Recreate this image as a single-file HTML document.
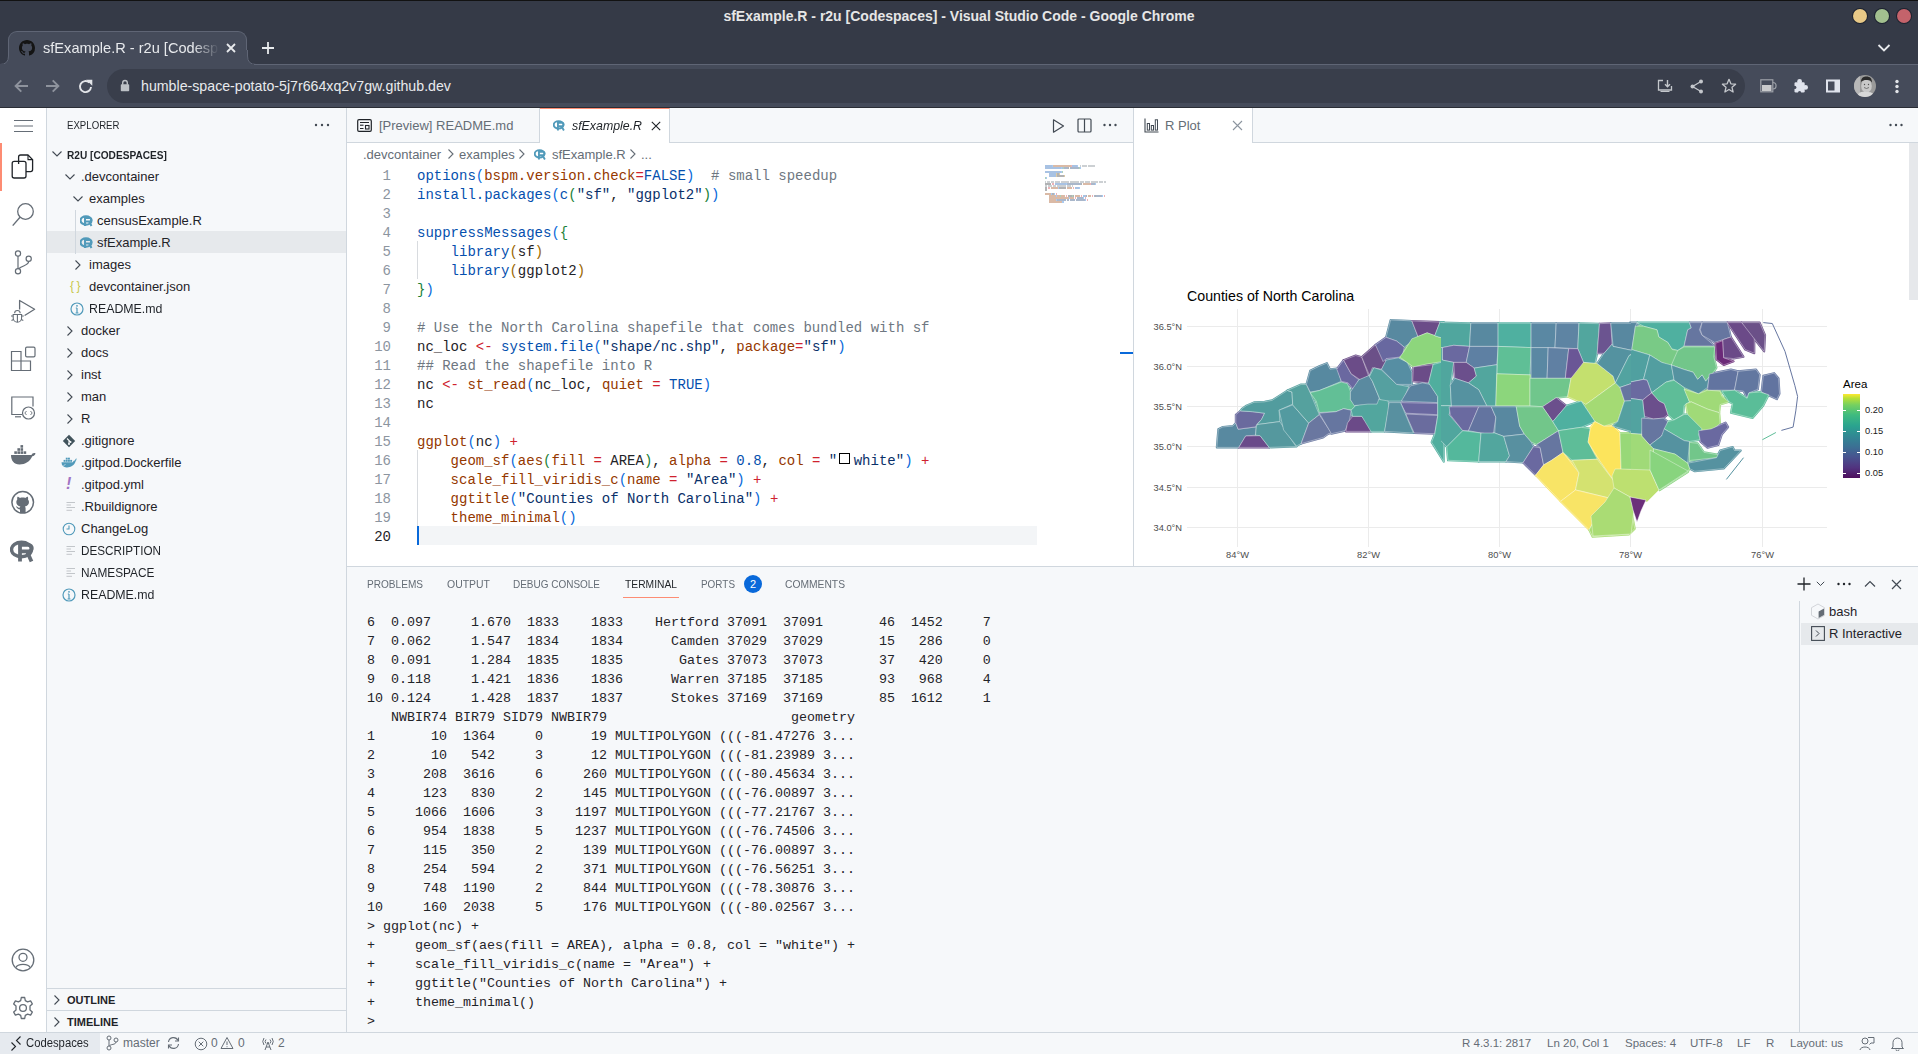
<!DOCTYPE html>
<html><head><meta charset="utf-8">
<style>
*{box-sizing:border-box;margin:0;padding:0}
html,body{width:1918px;height:1054px;overflow:hidden;background:#fff;font-family:"Liberation Sans",sans-serif}
.a{position:absolute}
.mono{font-family:"Liberation Mono",monospace}
/* chrome */
#chrome{left:0;top:0;width:1918px;height:108px;background:#353a47}
#topline{left:0;top:0;width:1918px;height:1px;background:#121212}
#wtitle{left:0;top:7px;width:1918px;text-align:center;color:#e6e6e6;font-weight:bold;font-size:14px;line-height:18px}
.tl{top:9px;width:14px;height:14px;border-radius:50%;box-shadow:0 0 0 1px #1d2330}
#tab{left:8px;top:31px;width:239px;height:34px;background:#454b5a;border-radius:9px 9px 0 0;border:1px solid #5f6575;border-bottom:none}
#toolbar{left:0;top:64px;width:1918px;height:43px;background:#454b5a}
#tbline{left:0;top:107px;width:1918px;height:1px;background:#2a2d35}
#omni{left:107px;top:69px;width:1638px;height:34px;border-radius:17px;background:#393e4b}
#url{left:141px;top:77px;color:#e8eaed;font-size:14.2px;line-height:18px}
/* vscode */
#act{left:0;top:108px;width:47px;height:924px;background:#fff;border-right:1px solid #d0d7de}
#side{left:47px;top:108px;width:300px;height:924px;background:#f6f8fa;border-right:1px solid #d0d7de}
#ed1{left:347px;top:108px;width:787px;height:458px;background:#fff}
#ed2{left:1133px;top:108px;width:785px;height:458px;background:#fff;border-left:1px solid #d0d7de}
#tabs1{left:347px;top:108px;width:786px;height:35px;background:#f6f8fa;border-bottom:1px solid #d0d7de}
#tabs2{left:1134px;top:108px;width:784px;height:35px;background:#f6f8fa;border-bottom:1px solid #d0d7de}
#panel{left:347px;top:566px;width:1571px;height:466px;background:#f6f8fa;border-top:1px solid #d0d7de}
#status{left:0;top:1032px;width:1918px;height:22px;background:#f6f8fa;border-top:1px solid #d0d7de}
.code{font-family:"Liberation Mono",monospace;font-size:14px;line-height:19px;white-space:pre}
.term{font-family:"Liberation Mono",monospace;font-size:13.33px;line-height:19px;white-space:pre;color:#1f2328}
.ui{font-size:13px;color:#1f2328;white-space:nowrap}
</style></head><body>
<div id="chrome" class="a"></div>
<div id="topline" class="a"></div>
<div id="wtitle" class="a">sfExample.R - r2u [Codespaces] - Visual Studio Code - Google Chrome</div>
<div class="a tl" style="left:1853px;background:#e8c987"></div>
<div class="a tl" style="left:1875px;background:#a3c08f"></div>
<div class="a tl" style="left:1897px;background:#c4636b"></div>
<div id="tab" class="a"></div>
<svg class="a" style="left:0;top:50px" width="10" height="15"><path d="M0 14.5 Q8.5 14.5 8.5 6 V0 H10 V15 H0Z" fill="#454b5a"/><path d="M0 14.5 Q8.5 14.5 8.5 6 V0" fill="none" stroke="#5f6575" stroke-width="1"/></svg>
<svg class="a" style="left:246px;top:50px" width="10" height="15"><path d="M10 14.5 Q1.5 14.5 1.5 6 V0 H0 V15 H10Z" fill="#454b5a"/><path d="M10 14.5 Q1.5 14.5 1.5 6 V0" fill="none" stroke="#5f6575" stroke-width="1"/></svg>
<div id="toolbar" class="a"></div>
<div class="a" style="left:254px;top:64px;width:1664px;height:1px;background:#5f6575"></div>
<svg class="a" style="left:19px;top:40px" width="16" height="16" viewBox="0 0 16 16"><path fill="#141414" d="M8 0C3.58 0 0 3.58 0 8c0 3.54 2.29 6.53 5.47 7.59.4.07.55-.17.55-.38 0-.19-.01-.82-.01-1.49-2.01.37-2.53-.49-2.69-.94-.09-.23-.48-.94-.82-1.13-.28-.15-.68-.52-.01-.53.63-.01 1.08.58 1.23.82.72 1.21 1.87.87 2.33.66.07-.52.28-.87.51-1.07-1.78-.2-3.640-.89-3.64-3.950 0-.87.31-1.59.82-2.15-.08-.2-.36-1.02.08-2.12 0 0 .67-.21 2.2.82.64-.18 1.32-.27 2-.27.68 0 1.36.09 2 .27 1.53-1.04 2.2-.82 2.2-.82.44 1.1.16 1.92.08 2.12.51.56.82 1.27.82 2.15 0 3.07-1.87 3.75-3.650 3.95.29.25.54.73.54 1.48 0 1.07-.01 1.93-.01 2.2 0 .21.15.46.55.38A8.013 8.013 0 0016 8c0-4.42-3.58-8-8-8z"/></svg>
<div class="a" style="left:43px;top:39px;width:176px;height:20px;overflow:hidden;color:#e8eaed;font-size:14.6px;line-height:18px;white-space:nowrap;-webkit-mask-image:linear-gradient(90deg,#000 150px,transparent 176px)">sfExample.R - r2u [Codespaces] - Visual Studio Code</div>
<svg class="a" style="left:225px;top:42px" width="12" height="12"><path d="M2 2L10 10M10 2L2 10" stroke="#e8eaed" stroke-width="1.8"/></svg>
<svg class="a" style="left:261px;top:41px" width="14" height="14"><path d="M7 1V13M1 7H13" stroke="#e8eaed" stroke-width="1.8"/></svg>
<svg class="a" style="left:1877px;top:43px" width="14" height="10"><path d="M1.5 2L7 7.5L12.5 2" fill="none" stroke="#e8eaed" stroke-width="1.8"/></svg>
<div id="tbline" class="a"></div>
<div id="omni" class="a"></div>
<svg class="a" style="left:13px;top:78px" width="16" height="16" viewBox="0 0 16 16"><path d="M15 8H2.8M8.3 2.3L2.6 8L8.3 13.7" fill="none" stroke="#8e939d" stroke-width="1.9"/></svg>
<svg class="a" style="left:45px;top:78px" width="16" height="16" viewBox="0 0 16 16"><path d="M1 8H13.2M7.7 2.3L13.4 8L7.7 13.7" fill="none" stroke="#8e939d" stroke-width="1.9"/></svg>
<svg class="a" style="left:77px;top:78px" width="17" height="17" viewBox="0 0 16 16"><path d="M13.2 8.5A5.2 5.2 0 1 1 11.6 4.3" fill="none" stroke="#e3e5e9" stroke-width="1.8"/><path d="M8.6 1.6H14.4V7.4Z" fill="#e3e5e9"/></svg>
<svg class="a" style="left:120px;top:79px" width="10" height="13" viewBox="0 0 10 13"><rect x="0.8" y="5.3" width="8.4" height="7" rx="0.8" fill="#bdc1c6"/><path d="M2.7 5.8V3.8A2.3 2.3 0 0 1 7.3 3.8V5.8" fill="none" stroke="#bdc1c6" stroke-width="1.4"/></svg>
<div id="url" class="a">humble-space-potato-5j7r664xq2v7gw.github.dev</div>
<svg class="a" style="left:1657px;top:79px" width="16" height="15" viewBox="0 0 16 15"><path d="M6 1.5H1.5V11H14.5V7" fill="none" stroke="#c4c7cc" stroke-width="1.3"/><path d="M10.5 1V7.5M8 5.3L10.5 7.8L13 5.3" fill="none" stroke="#c4c7cc" stroke-width="1.4"/><rect x="3.5" y="12" width="9" height="1" fill="#c4c7cc"/></svg>
<svg class="a" style="left:1690px;top:79px" width="14" height="15" viewBox="0 0 14 15"><circle cx="11" cy="2.5" r="2" fill="#c4c7cc"/><circle cx="2.5" cy="7.5" r="2" fill="#c4c7cc"/><circle cx="11" cy="12.5" r="2" fill="#c4c7cc"/><path d="M11 2.5L2.5 7.5L11 12.5" fill="none" stroke="#c4c7cc" stroke-width="1.3"/></svg>
<svg class="a" style="left:1721px;top:78px" width="16" height="16" viewBox="0 0 16 16"><path d="M8 1.3L9.9 5.8L14.6 6.2L11 9.3L12.1 14L8 11.5L3.9 14L5 9.3L1.4 6.2L6.1 5.8Z" fill="none" stroke="#c4c7cc" stroke-width="1.3" stroke-linejoin="round"/></svg>
<svg class="a" style="left:1760px;top:79px" width="18" height="14" viewBox="0 0 18 14"><rect x="0.8" y="0.8" width="12" height="12" fill="none" stroke="#9da1a8" stroke-width="1.2"/><rect x="2" y="6" width="9.5" height="6" fill="#c9cacc"/><path d="M12.8 3.5A3 3 0 0 1 12.8 10" fill="none" stroke="#9da1a8" stroke-width="1.2"/></svg>
<svg class="a" style="left:1793px;top:78px" width="16" height="16" viewBox="0 0 16 16"><g fill="#dfe3ec"><rect x="1.5" y="4.3" width="10.2" height="10.2" rx="1.3"/><circle cx="6.6" cy="3.4" r="2.4"/><circle cx="12.6" cy="9.4" r="2.4"/><circle cx="1.8" cy="9.4" r="1.6" fill="#454b5a"/><circle cx="6.6" cy="14.6" r="1.6" fill="#454b5a"/></g></svg>
<svg class="a" style="left:1825px;top:78px" width="16" height="16" viewBox="0 0 16 16"><rect x="1" y="1.5" width="14" height="13" fill="#dfe3ec"/><rect x="3" y="3.5" width="6.5" height="9" fill="#454b5a"/></svg>
<svg class="a" style="left:1854px;top:75px" width="22" height="22" viewBox="0 0 22 22"><defs><clipPath id="av"><circle cx="11" cy="11" r="11"/></clipPath></defs><g clip-path="url(#av)"><rect width="22" height="22" fill="#9a9a9a"/><rect x="0" y="0" width="6" height="22" fill="#b8b8b8"/><ellipse cx="12.5" cy="11" rx="5.3" ry="6.8" fill="#c9c9c9"/><path d="M7 7C7 2.5 10 1.5 12.5 1.5C16 1.5 18 3.5 18 7.5C17 5.5 15 4.8 12.5 5C10 5 8.5 5.5 7 7Z" fill="#2a2a2a"/><path d="M10 12.5Q12.5 14.5 15 12.5" stroke="#6a6a6a" stroke-width="0.9" fill="none"/><circle cx="10.5" cy="9.5" r="0.7" fill="#555"/><circle cx="14.5" cy="9.5" r="0.7" fill="#555"/><path d="M3 22C4 17 8 16.5 12.5 17C17 16.5 20 18 21 22Z" fill="#d8d8d8"/></g></svg>

<svg class="a" style="left:1893px;top:79px" width="8" height="16" viewBox="0 0 8 16"><circle cx="4" cy="2.5" r="1.7" fill="#e3e5e9"/><circle cx="4" cy="7.5" r="1.7" fill="#e3e5e9"/><circle cx="4" cy="12.5" r="1.7" fill="#e3e5e9"/></svg>

<div id="act" class="a"></div>
<div id="side" class="a"></div>
<svg class="a" style="left:0;top:0" width="47" height="1054" fill="none" stroke="#656d76" stroke-width="1.2">
<path d="M14 120.5H33M14 126H33M14 131.5H33" stroke-width="1.1"/>
<path d="M18.6 164V157A2 2 0 0 1 20.6 155H28L32.6 159.6V169.6A2 2 0 0 1 30.6 171.6H26" stroke="#1f2328" stroke-width="1.3" stroke-linejoin="round"/>
<path d="M28 155V159.6H32.6" stroke="#1f2328" stroke-width="1.1"/>
<rect x="12.2" y="161.4" width="13.8" height="16.6" rx="2" stroke="#1f2328" stroke-width="1.3"/>
<circle cx="25.5" cy="211.5" r="7.8" stroke-width="1.3"/>
<path d="M20 217.3L12.7 225.6" stroke-width="1.4"/>
<circle cx="18" cy="253.5" r="2.6"/><circle cx="18" cy="271.3" r="2.6"/><circle cx="28.7" cy="258.7" r="2.6"/>
<path d="M18 256.1V268.7M28.7 261.3C28.7 265.5 23 265 18.6 268.8"/>
<path d="M19.6 309.5V300.5L34.6 309.3L24.6 315.5" stroke-linejoin="round" stroke-width="1.3"/>
<path d="M14.6 313.3A2.8 2.8 0 0 1 20.2 313.3M13.2 314.5H21.6V318A4.2 4.2 0 0 1 13.2 318ZM11 316H13.2M21.6 316H23.8M11.5 320.5L13.5 319.5M23.3 320.5L21.3 319.5M17.4 314.5V322" stroke-width="1.1"/>
<path d="M11.5 351.5H21V361H11.5ZM11.5 361H21V370.5H11.5ZM21 361H30.5V370.5H21Z" stroke-width="1.2"/>
<rect x="25.6" y="347.2" width="9.4" height="9.6" rx="1.3" stroke-width="1.2"/>
<path d="M22 414.5H11.8V397H33V406.5" stroke-width="1.2"/><path d="M15 416.8H21" stroke-width="1.2"/>
<circle cx="28.5" cy="413" r="6" stroke-width="1.2"/><path d="M26.5 411L24.8 413L26.5 415M30.5 411L32.2 413L30.5 415" stroke-width="0.9"/>
<path fill="#656d76" stroke="none" d="M11 455H31.5C32 453.2 33.7 452.5 35.5 453.2C35.2 455 34 456 32.3 456.3C30 461.5 25.3 464.5 19.5 464.5C14 464.5 11 460.5 11 455Z"/>
<g fill="#656d76" stroke="none"><rect x="14.3" y="451.3" width="2.6" height="2.6"/><rect x="17.4" y="451.3" width="2.6" height="2.6"/><rect x="20.5" y="451.3" width="2.6" height="2.6"/><rect x="23.6" y="451.3" width="2.6" height="2.6"/><rect x="20.5" y="448.2" width="2.6" height="2.6"/><rect x="17.4" y="448.2" width="2.6" height="2.6"/><rect x="20.5" y="445.1" width="2.6" height="2.6"/></g>
<circle cx="22.7" cy="502.3" r="10.8" stroke-width="1.5"/>
<path fill="#656d76" stroke="none" d="M20 513V509.5C18 509.2 16.8 508.2 16.3 507C16 506 16.8 506.3 17.5 507C18.3 508 19.3 507.8 19.8 507.5C19.9 507 20.1 506.6 20.4 506.4C18 506 16.3 504.8 16.3 502C16.3 501 16.6 500.2 17.3 499.4C17.2 499 17 498 17.5 496.8C18.4 496.8 19.4 497.5 19.9 497.9C21.4 497.5 23.9 497.5 25.4 497.9C25.9 497.5 26.9 496.8 27.8 496.8C28.3 498 28.1 499 28 499.4C28.7 500.2 29 501 29 502C29 504.8 27.3 506 24.9 506.4C25.3 506.8 25.6 507.4 25.6 508.3V513Z"/>
</svg>
<svg class="a" style="left:10px;top:540px" width="27" height="23" viewBox="0 0 27 23"><ellipse cx="11.5" cy="9.5" rx="10" ry="7.3" fill="none" stroke="#656d76" stroke-width="3.4"/><path d="M10 4.8H18.5A3.3 3.3 0 0 1 18.5 11.4H10ZM10 4.8V21.5M17 11.4L21.5 21.5" fill="none" stroke="#656d76" stroke-width="3.8"/></svg>
<div class="a" style="left:0;top:143px;width:2px;height:48px;background:#fd8c73"></div>
<svg class="a" style="left:11px;top:948px" width="24" height="24" viewBox="0 0 24 24" fill="none" stroke="#656d76" stroke-width="1.3"><circle cx="12" cy="12" r="10.8"/><circle cx="12" cy="9.3" r="4"/><path d="M5 19.5C6.5 15.3 17.5 15.3 19 19.5"/></svg>
<svg class="a" style="left:11px;top:996px" width="24" height="24" viewBox="0 0 24 24" fill="none" stroke="#656d76" stroke-width="1.3"><path d="M10.3 1.5H13.7L14.3 4.6L16.6 5.9L19.6 4.9L21.3 7.9L19 10V14L21.3 16.1L19.6 19.1L16.6 18.1L14.3 19.4L13.7 22.5H10.3L9.7 19.4L7.4 18.1L4.4 19.1L2.7 16.1L5 14V10L2.7 7.9L4.4 4.9L7.4 5.9L9.7 4.6Z" stroke-linejoin="round"/><circle cx="12" cy="12" r="3.4"/></svg>
<div class="a ui" style="left:67px;top:117px;font-size:11px;line-height:16px;color:#1f2328;transform-origin:0 0;transform:scaleX(0.876)">EXPLORER</div><svg class="a" style="left:314px;top:122px" width="16" height="6"><circle cx="2" cy="3" r="1.2" fill="#424a53"/><circle cx="8" cy="3" r="1.2" fill="#424a53"/><circle cx="14" cy="3" r="1.2" fill="#424a53"/></svg><div class="a" style="left:47px;top:231px;width:299px;height:22px;background:#e6e9ec"></div><div class="a" style="left:75px;top:210px;width:1px;height:44px;background:#d0d7de"></div><svg class="a" style="left:51px;top:148px" width="12" height="12"><path d="M1.5 3.5L6 8L10.5 3.5" fill="none" stroke="#424a53" stroke-width="1.1"/></svg><div class="a ui" style="left:67px;top:147px;line-height:16px;font-size:11px;font-weight:bold;transform-origin:0 0;transform:scaleX(0.92)">R2U [CODESPACES]</div><svg class="a" style="left:64px;top:171px" width="12" height="12"><path d="M1.5 3.5L6 8L10.5 3.5" fill="none" stroke="#424a53" stroke-width="1.1"/></svg><div class="a ui" style="left:81px;top:168px;line-height:18px">.devcontainer</div><svg class="a" style="left:72px;top:193px" width="12" height="12"><path d="M1.5 3.5L6 8L10.5 3.5" fill="none" stroke="#424a53" stroke-width="1.1"/></svg><div class="a ui" style="left:89px;top:190px;line-height:18px">examples</div><svg class="a" style="left:80px;top:215px" width="14" height="12" viewBox="0 0 14 12"><ellipse cx="6" cy="5.5" rx="5.5" ry="4.2" fill="none" stroke="#519aba" stroke-width="2.2"/><path d="M5 3H9.5A1.7 1.7 0 0 1 9.5 6.6H5ZM5 3V11M9 6.5L11.5 11" fill="none" stroke="#519aba" stroke-width="2"/></svg><div class="a ui" style="left:97px;top:212px;line-height:18px">censusExample.R</div><svg class="a" style="left:80px;top:237px" width="14" height="12" viewBox="0 0 14 12"><ellipse cx="6" cy="5.5" rx="5.5" ry="4.2" fill="none" stroke="#519aba" stroke-width="2.2"/><path d="M5 3H9.5A1.7 1.7 0 0 1 9.5 6.6H5ZM5 3V11M9 6.5L11.5 11" fill="none" stroke="#519aba" stroke-width="2"/></svg><div class="a ui" style="left:97px;top:234px;line-height:18px">sfExample.R</div><svg class="a" style="left:72px;top:259px" width="12" height="12"><path d="M3.5 1.5L8 6L3.5 10.5" fill="none" stroke="#424a53" stroke-width="1.1"/></svg><div class="a ui" style="left:89px;top:256px;line-height:18px">images</div><div class="a" style="left:70px;top:277px;font-size:12px;line-height:18px;color:#c8c84a;font-family:'Liberation Sans';letter-spacing:2.5px">{}</div><div class="a ui" style="left:89px;top:278px;line-height:18px">devcontainer.json</div><svg class="a" style="left:70px;top:302px" width="14" height="14"><circle cx="7" cy="7" r="6" fill="none" stroke="#519aba" stroke-width="1.2"/><path d="M7 6V11M5.5 11H8.5M5.8 6H7" stroke="#519aba" stroke-width="1.2" fill="none"/><circle cx="7" cy="3.8" r="0.9" fill="#519aba"/></svg><div class="a ui" style="left:89px;top:300px;line-height:18px;transform-origin:0 0;transform:scaleX(0.95)">README.md</div><svg class="a" style="left:64px;top:325px" width="12" height="12"><path d="M3.5 1.5L8 6L3.5 10.5" fill="none" stroke="#424a53" stroke-width="1.1"/></svg><div class="a ui" style="left:81px;top:322px;line-height:18px">docker</div><svg class="a" style="left:64px;top:347px" width="12" height="12"><path d="M3.5 1.5L8 6L3.5 10.5" fill="none" stroke="#424a53" stroke-width="1.1"/></svg><div class="a ui" style="left:81px;top:344px;line-height:18px">docs</div><svg class="a" style="left:64px;top:369px" width="12" height="12"><path d="M3.5 1.5L8 6L3.5 10.5" fill="none" stroke="#424a53" stroke-width="1.1"/></svg><div class="a ui" style="left:81px;top:366px;line-height:18px">inst</div><svg class="a" style="left:64px;top:391px" width="12" height="12"><path d="M3.5 1.5L8 6L3.5 10.5" fill="none" stroke="#424a53" stroke-width="1.1"/></svg><div class="a ui" style="left:81px;top:388px;line-height:18px">man</div><svg class="a" style="left:64px;top:413px" width="12" height="12"><path d="M3.5 1.5L8 6L3.5 10.5" fill="none" stroke="#424a53" stroke-width="1.1"/></svg><div class="a ui" style="left:81px;top:410px;line-height:18px">R</div><svg class="a" style="left:62px;top:434px" width="14" height="14"><path d="M7 0.8L13.2 7L7 13.2L0.8 7Z" fill="#41535b"/><path d="M5 4.5L8.5 8M7 6.5V10" stroke="#f6f8fa" stroke-width="1.1"/><circle cx="7" cy="10" r="1" fill="#f6f8fa"/><circle cx="8.5" cy="8" r="1" fill="#f6f8fa"/></svg><div class="a ui" style="left:81px;top:432px;line-height:18px">.gitignore</div><svg class="a" style="left:61px;top:457px" width="16" height="11" viewBox="0 0 16 11"><path d="M0.5 5.2H11.8C12.3 4.2 13.2 3.3 14.3 3.3C14 2.5 14.5 1.6 15.5 1.2C15.6 2.4 15.3 3.6 14.5 4.6C13.5 8.5 9.5 10.6 5.5 10.4C2.5 10.2 0.5 8.5 0.5 5.2Z" fill="#519aba"/><g fill="#519aba"><rect x="2.6" y="2.9" width="1.9" height="1.9"/><rect x="4.8" y="2.9" width="1.9" height="1.9"/><rect x="7" y="2.9" width="1.9" height="1.9"/><rect x="9.2" y="2.9" width="1.9" height="1.9"/><rect x="4.8" y="0.7" width="1.9" height="1.9"/><rect x="7" y="0.7" width="1.9" height="1.9"/></g><path d="M2.5 8.5L4.5 7.5" stroke="#f6f8fa" stroke-width="0.6"/></svg><div class="a ui" style="left:81px;top:454px;line-height:18px">.gitpod.Dockerfile</div><div class="a" style="left:66px;top:474px;font-size:16px;line-height:20px;color:#a074c4;font-weight:bold;font-style:italic">!</div><div class="a ui" style="left:81px;top:476px;line-height:18px">.gitpod.yml</div><svg class="a" style="left:66px;top:501px" width="10" height="12"><path d="M0.5 1.5H9M0.5 4H5M0.5 6.5H9M0.5 9.3H6" stroke="#bcc0c4" stroke-width="0.9"/></svg><div class="a ui" style="left:81px;top:498px;line-height:18px">.Rbuildignore</div><svg class="a" style="left:62px;top:522px" width="14" height="14"><circle cx="7" cy="7" r="5.8" fill="none" stroke="#519aba" stroke-width="1.1"/><path d="M7 3.5V7H4.5" stroke="#519aba" stroke-width="1.1" fill="none"/></svg><div class="a ui" style="left:81px;top:520px;line-height:18px">ChangeLog</div><svg class="a" style="left:66px;top:545px" width="10" height="12"><path d="M0.5 1.5H9M0.5 4H5M0.5 6.5H9M0.5 9.3H6" stroke="#bcc0c4" stroke-width="0.9"/></svg><div class="a ui" style="left:81px;top:542px;line-height:18px;transform-origin:0 0;transform:scaleX(0.9)">DESCRIPTION</div><svg class="a" style="left:66px;top:567px" width="10" height="12"><path d="M0.5 1.5H9M0.5 4H5M0.5 6.5H9M0.5 9.3H6" stroke="#bcc0c4" stroke-width="0.9"/></svg><div class="a ui" style="left:81px;top:564px;line-height:18px;transform-origin:0 0;transform:scaleX(0.91)">NAMESPACE</div><svg class="a" style="left:62px;top:588px" width="14" height="14"><circle cx="7" cy="7" r="6" fill="none" stroke="#519aba" stroke-width="1.2"/><path d="M7 6V11M5.5 11H8.5M5.8 6H7" stroke="#519aba" stroke-width="1.2" fill="none"/><circle cx="7" cy="3.8" r="0.9" fill="#519aba"/></svg><div class="a ui" style="left:81px;top:586px;line-height:18px;transform-origin:0 0;transform:scaleX(0.95)">README.md</div><div class="a" style="left:47px;top:988px;width:299px;height:1px;background:#d0d7de"></div><div class="a" style="left:47px;top:1010px;width:299px;height:1px;background:#d0d7de"></div><svg class="a" style="left:51px;top:994px" width="12" height="12"><path d="M3.5 1.5L8 6L3.5 10.5" fill="none" stroke="#424a53" stroke-width="1.1"/></svg><div class="a ui" style="left:67px;top:992px;line-height:16px;font-size:11px;font-weight:bold">OUTLINE</div><svg class="a" style="left:51px;top:1016px" width="12" height="12"><path d="M3.5 1.5L8 6L3.5 10.5" fill="none" stroke="#424a53" stroke-width="1.1"/></svg><div class="a ui" style="left:67px;top:1014px;line-height:16px;font-size:11px;font-weight:bold">TIMELINE</div>
<div id="ed1" class="a"></div>
<div id="ed2" class="a"></div>
<div id="tabs1" class="a"></div>
<div id="tabs2" class="a"></div>
<div class="a" style="left:347px;top:108px;width:193px;height:35px;border-right:1px solid #d0d7de"></div><svg class="a" style="left:357px;top:119px" width="15" height="13" viewBox="0 0 15 13"><rect x="0.7" y="0.7" width="13.6" height="11.6" rx="1.3" fill="none" stroke="#1f2328" stroke-width="1.2"/><path d="M3 3.5H12M3 9.5H6.5" stroke="#1f2328" stroke-width="1.2"/><rect x="8.5" y="6.5" width="3.5" height="3.5" fill="none" stroke="#1f2328" stroke-width="1.1"/><path d="M3 6.2H6.5" stroke="#1f2328" stroke-width="1.1"/></svg><div class="a ui" style="left:379px;top:117px;line-height:18px;color:#656d76">[Preview] README.md</div><div class="a" style="left:540px;top:108px;width:130px;height:35px;background:#fff;border-right:1px solid #d0d7de;border-top:1px solid #fd8c73"></div><svg class="a" style="left:553px;top:120px" width="13" height="11" viewBox="0 0 14 12"><ellipse cx="6" cy="5.2" rx="5.3" ry="4" fill="none" stroke="#519aba" stroke-width="2.1"/><path d="M5.3 3H9.6A1.8 1.8 0 0 1 9.6 6.6H5.3ZM5.3 3V11.5M9 6.5L11.8 11.5" fill="none" stroke="#519aba" stroke-width="2"/></svg><div class="a ui" style="left:572px;top:117px;line-height:18px;font-style:italic;transform-origin:0 0;transform:scaleX(0.95)">sfExample.R</div><svg class="a" style="left:651px;top:121px" width="10" height="10"><path d="M0.8 0.8L9.2 9.2M9.2 0.8L0.8 9.2" stroke="#1f2328" stroke-width="1.1"/></svg><svg class="a" style="left:1051px;top:118px" width="14" height="16" viewBox="0 0 14 16"><path d="M2.5 1.8L12.5 8L2.5 14.2Z" fill="none" stroke="#424a53" stroke-width="1.2" stroke-linejoin="round"/></svg><svg class="a" style="left:1077px;top:118px" width="15" height="15" viewBox="0 0 15 15"><rect x="1" y="1" width="13" height="13" rx="1" fill="none" stroke="#424a53" stroke-width="1.2"/><path d="M7.5 1V14" stroke="#424a53" stroke-width="1.2"/></svg><svg class="a" style="left:1102px;top:122px" width="16" height="6"><circle cx="2.5" cy="3" r="1.2" fill="#424a53"/><circle cx="8" cy="3" r="1.2" fill="#424a53"/><circle cx="13.5" cy="3" r="1.2" fill="#424a53"/></svg><div class="a ui" style="left:363px;top:146px;line-height:18px;color:#656d76">.devcontainer</div><svg class="a" style="left:447px;top:148px" width="8" height="12"><path d="M1.5 1.5L6 6L1.5 10.5" fill="none" stroke="#656d76" stroke-width="1.1"/></svg><div class="a ui" style="left:459px;top:146px;line-height:18px;color:#656d76">examples</div><svg class="a" style="left:518px;top:148px" width="8" height="12"><path d="M1.5 1.5L6 6L1.5 10.5" fill="none" stroke="#656d76" stroke-width="1.1"/></svg><svg class="a" style="left:534px;top:149px" width="13" height="11" viewBox="0 0 14 12"><ellipse cx="6" cy="5.2" rx="5.3" ry="4" fill="none" stroke="#519aba" stroke-width="2.1"/><path d="M5.3 3H9.6A1.8 1.8 0 0 1 9.6 6.6H5.3ZM5.3 3V11.5M9 6.5L11.8 11.5" fill="none" stroke="#519aba" stroke-width="2"/></svg><div class="a ui" style="left:552px;top:146px;line-height:18px;color:#656d76">sfExample.R</div><svg class="a" style="left:629px;top:148px" width="8" height="12"><path d="M1.5 1.5L6 6L1.5 10.5" fill="none" stroke="#656d76" stroke-width="1.1"/></svg><div class="a ui" style="left:641px;top:146px;line-height:18px;color:#656d76">...</div><div class="a" style="left:417px;top:526px;width:620px;height:19px;background:#f3f5f7"></div><div class="a" style="left:417px;top:526px;width:2px;height:19px;background:#0969da"></div><div class="a" style="left:417px;top:241px;width:1px;height:38px;background:#d8dbdf"></div><div class="a" style="left:417px;top:450px;width:1px;height:76px;background:#d8dbdf"></div><div class="a code" style="left:350px;top:167px;width:41px;text-align:right;color:#8c959f">1</div><div class="a code" style="left:350px;top:186px;width:41px;text-align:right;color:#8c959f">2</div><div class="a code" style="left:350px;top:205px;width:41px;text-align:right;color:#8c959f">3</div><div class="a code" style="left:350px;top:224px;width:41px;text-align:right;color:#8c959f">4</div><div class="a code" style="left:350px;top:243px;width:41px;text-align:right;color:#8c959f">5</div><div class="a code" style="left:350px;top:262px;width:41px;text-align:right;color:#8c959f">6</div><div class="a code" style="left:350px;top:281px;width:41px;text-align:right;color:#8c959f">7</div><div class="a code" style="left:350px;top:300px;width:41px;text-align:right;color:#8c959f">8</div><div class="a code" style="left:350px;top:319px;width:41px;text-align:right;color:#8c959f">9</div><div class="a code" style="left:350px;top:338px;width:41px;text-align:right;color:#8c959f">10</div><div class="a code" style="left:350px;top:357px;width:41px;text-align:right;color:#8c959f">11</div><div class="a code" style="left:350px;top:376px;width:41px;text-align:right;color:#8c959f">12</div><div class="a code" style="left:350px;top:395px;width:41px;text-align:right;color:#8c959f">13</div><div class="a code" style="left:350px;top:414px;width:41px;text-align:right;color:#8c959f">14</div><div class="a code" style="left:350px;top:433px;width:41px;text-align:right;color:#8c959f">15</div><div class="a code" style="left:350px;top:452px;width:41px;text-align:right;color:#8c959f">16</div><div class="a code" style="left:350px;top:471px;width:41px;text-align:right;color:#8c959f">17</div><div class="a code" style="left:350px;top:490px;width:41px;text-align:right;color:#8c959f">18</div><div class="a code" style="left:350px;top:509px;width:41px;text-align:right;color:#8c959f">19</div><div class="a code" style="left:350px;top:528px;width:41px;text-align:right;color:#1f2328">20</div><div class="a code" style="left:417px;top:167px"><span style="color:#0550ae">options</span><span style="color:#0969da">(</span><span style="color:#953800">bspm.version.check</span><span style="color:#cf222e">=</span><span style="color:#0550ae">FALSE</span><span style="color:#0969da">)</span><span style="color:#6e7781">  # small speedup</span></div><div class="a code" style="left:417px;top:186px"><span style="color:#0550ae">install.packages</span><span style="color:#0969da">(</span><span style="color:#0550ae">c</span><span style="color:#1a7f37">(</span><span style="color:#0a3069">"sf"</span><span style="color:#1f2328">, </span><span style="color:#0a3069">"ggplot2"</span><span style="color:#1a7f37">)</span><span style="color:#0969da">)</span></div><div class="a code" style="left:417px;top:224px"><span style="color:#0550ae">suppressMessages</span><span style="color:#0969da">(</span><span style="color:#1a7f37">{</span></div><div class="a code" style="left:417px;top:243px"><span style="color:#1f2328">    </span><span style="color:#0550ae">library</span><span style="color:#9a6700">(</span><span style="color:#1f2328">sf</span><span style="color:#9a6700">)</span></div><div class="a code" style="left:417px;top:262px"><span style="color:#1f2328">    </span><span style="color:#0550ae">library</span><span style="color:#9a6700">(</span><span style="color:#1f2328">ggplot2</span><span style="color:#9a6700">)</span></div><div class="a code" style="left:417px;top:281px"><span style="color:#1a7f37">}</span><span style="color:#0969da">)</span></div><div class="a code" style="left:417px;top:319px"><span style="color:#6e7781"># Use the North Carolina shapefile that comes bundled with sf</span></div><div class="a code" style="left:417px;top:338px"><span style="color:#1f2328">nc_loc </span><span style="color:#cf222e">&lt;-</span><span style="color:#1f2328"> </span><span style="color:#0550ae">system.file</span><span style="color:#0969da">(</span><span style="color:#0a3069">"shape/nc.shp"</span><span style="color:#1f2328">, </span><span style="color:#953800">package</span><span style="color:#cf222e">=</span><span style="color:#0a3069">"sf"</span><span style="color:#0969da">)</span></div><div class="a code" style="left:417px;top:357px"><span style="color:#6e7781">## Read the shapefile into R</span></div><div class="a code" style="left:417px;top:376px"><span style="color:#1f2328">nc </span><span style="color:#cf222e">&lt;-</span><span style="color:#1f2328"> </span><span style="color:#953800">st_read</span><span style="color:#0969da">(</span><span style="color:#1f2328">nc_loc, </span><span style="color:#953800">quiet</span><span style="color:#cf222e"> = </span><span style="color:#0550ae">TRUE</span><span style="color:#0969da">)</span></div><div class="a code" style="left:417px;top:395px"><span style="color:#1f2328">nc</span></div><div class="a code" style="left:417px;top:433px"><span style="color:#953800">ggplot</span><span style="color:#0969da">(</span><span style="color:#1f2328">nc</span><span style="color:#0969da">)</span><span style="color:#cf222e"> +</span></div><div class="a code" style="left:417px;top:452px"><span style="color:#1f2328">    </span><span style="color:#953800">geom_sf</span><span style="color:#0969da">(</span><span style="color:#953800">aes</span><span style="color:#1a7f37">(</span><span style="color:#953800">fill</span><span style="color:#cf222e"> = </span><span style="color:#1f2328">AREA</span><span style="color:#1a7f37">)</span><span style="color:#1f2328">, </span><span style="color:#953800">alpha</span><span style="color:#cf222e"> = </span><span style="color:#0550ae">0.8</span><span style="color:#1f2328">, </span><span style="color:#953800">col</span><span style="color:#cf222e"> = </span><span style="color:#0a3069">"</span><span style="display:inline-block;width:11px;height:11px;border:1.3px solid #000;background:#fff;margin:0 4px 0 1.5px;vertical-align:1px"></span><span style="color:#0a3069">white"</span><span style="color:#0969da">)</span><span style="color:#cf222e"> +</span></div><div class="a code" style="left:417px;top:471px"><span style="color:#1f2328">    </span><span style="color:#953800">scale_fill_viridis_c</span><span style="color:#0969da">(</span><span style="color:#953800">name</span><span style="color:#cf222e"> = </span><span style="color:#0a3069">"Area"</span><span style="color:#0969da">)</span><span style="color:#cf222e"> +</span></div><div class="a code" style="left:417px;top:490px"><span style="color:#1f2328">    </span><span style="color:#953800">ggtitle</span><span style="color:#0969da">(</span><span style="color:#0a3069">"Counties of North Carolina"</span><span style="color:#0969da">)</span><span style="color:#cf222e"> +</span></div><div class="a code" style="left:417px;top:509px"><span style="color:#1f2328">    </span><span style="color:#953800">theme_minimal</span><span style="color:#0969da">()</span></div><svg class="a" style="left:1045px;top:165px" width="70" height="40"><rect x="0" y="0" width="7" height="2" fill="#0550ae" fill-opacity="0.35"/><rect x="7" y="0" width="1" height="2" fill="#0969da" fill-opacity="0.35"/><rect x="8" y="0" width="18" height="2" fill="#953800" fill-opacity="0.35"/><rect x="26" y="0" width="1" height="2" fill="#cf222e" fill-opacity="0.35"/><rect x="27" y="0" width="5" height="2" fill="#0550ae" fill-opacity="0.35"/><rect x="32" y="0" width="1" height="2" fill="#0969da" fill-opacity="0.35"/><rect x="35" y="0" width="1" height="2" fill="#6e7781" fill-opacity="0.35"/><rect x="37" y="0" width="5" height="2" fill="#6e7781" fill-opacity="0.35"/><rect x="43" y="0" width="7" height="2" fill="#6e7781" fill-opacity="0.35"/><rect x="0" y="2" width="16" height="2" fill="#0550ae" fill-opacity="0.35"/><rect x="16" y="2" width="1" height="2" fill="#0969da" fill-opacity="0.35"/><rect x="17" y="2" width="1" height="2" fill="#0550ae" fill-opacity="0.35"/><rect x="18" y="2" width="1" height="2" fill="#1a7f37" fill-opacity="0.35"/><rect x="19" y="2" width="4" height="2" fill="#0a3069" fill-opacity="0.35"/><rect x="23" y="2" width="1" height="2" fill="#1f2328" fill-opacity="0.35"/><rect x="25" y="2" width="9" height="2" fill="#0a3069" fill-opacity="0.35"/><rect x="34" y="2" width="1" height="2" fill="#1a7f37" fill-opacity="0.35"/><rect x="35" y="2" width="1" height="2" fill="#0969da" fill-opacity="0.35"/><rect x="0" y="6" width="16" height="2" fill="#0550ae" fill-opacity="0.35"/><rect x="16" y="6" width="1" height="2" fill="#0969da" fill-opacity="0.35"/><rect x="17" y="6" width="1" height="2" fill="#1a7f37" fill-opacity="0.35"/><rect x="4" y="8" width="7" height="2" fill="#0550ae" fill-opacity="0.35"/><rect x="11" y="8" width="1" height="2" fill="#9a6700" fill-opacity="0.35"/><rect x="12" y="8" width="2" height="2" fill="#1f2328" fill-opacity="0.35"/><rect x="14" y="8" width="1" height="2" fill="#9a6700" fill-opacity="0.35"/><rect x="4" y="10" width="7" height="2" fill="#0550ae" fill-opacity="0.35"/><rect x="11" y="10" width="1" height="2" fill="#9a6700" fill-opacity="0.35"/><rect x="12" y="10" width="7" height="2" fill="#1f2328" fill-opacity="0.35"/><rect x="19" y="10" width="1" height="2" fill="#9a6700" fill-opacity="0.35"/><rect x="0" y="12" width="1" height="2" fill="#1a7f37" fill-opacity="0.35"/><rect x="1" y="12" width="1" height="2" fill="#0969da" fill-opacity="0.35"/><rect x="0" y="16" width="1" height="2" fill="#6e7781" fill-opacity="0.35"/><rect x="2" y="16" width="3" height="2" fill="#6e7781" fill-opacity="0.35"/><rect x="6" y="16" width="3" height="2" fill="#6e7781" fill-opacity="0.35"/><rect x="10" y="16" width="5" height="2" fill="#6e7781" fill-opacity="0.35"/><rect x="16" y="16" width="8" height="2" fill="#6e7781" fill-opacity="0.35"/><rect x="25" y="16" width="9" height="2" fill="#6e7781" fill-opacity="0.35"/><rect x="35" y="16" width="4" height="2" fill="#6e7781" fill-opacity="0.35"/><rect x="40" y="16" width="5" height="2" fill="#6e7781" fill-opacity="0.35"/><rect x="46" y="16" width="7" height="2" fill="#6e7781" fill-opacity="0.35"/><rect x="54" y="16" width="4" height="2" fill="#6e7781" fill-opacity="0.35"/><rect x="59" y="16" width="2" height="2" fill="#6e7781" fill-opacity="0.35"/><rect x="0" y="18" width="6" height="2" fill="#1f2328" fill-opacity="0.35"/><rect x="7" y="18" width="2" height="2" fill="#cf222e" fill-opacity="0.35"/><rect x="10" y="18" width="11" height="2" fill="#0550ae" fill-opacity="0.35"/><rect x="21" y="18" width="1" height="2" fill="#0969da" fill-opacity="0.35"/><rect x="22" y="18" width="14" height="2" fill="#0a3069" fill-opacity="0.35"/><rect x="36" y="18" width="1" height="2" fill="#1f2328" fill-opacity="0.35"/><rect x="38" y="18" width="7" height="2" fill="#953800" fill-opacity="0.35"/><rect x="45" y="18" width="1" height="2" fill="#cf222e" fill-opacity="0.35"/><rect x="46" y="18" width="4" height="2" fill="#0a3069" fill-opacity="0.35"/><rect x="50" y="18" width="1" height="2" fill="#0969da" fill-opacity="0.35"/><rect x="0" y="20" width="2" height="2" fill="#6e7781" fill-opacity="0.35"/><rect x="3" y="20" width="4" height="2" fill="#6e7781" fill-opacity="0.35"/><rect x="8" y="20" width="3" height="2" fill="#6e7781" fill-opacity="0.35"/><rect x="12" y="20" width="9" height="2" fill="#6e7781" fill-opacity="0.35"/><rect x="22" y="20" width="4" height="2" fill="#6e7781" fill-opacity="0.35"/><rect x="27" y="20" width="1" height="2" fill="#6e7781" fill-opacity="0.35"/><rect x="0" y="22" width="2" height="2" fill="#1f2328" fill-opacity="0.35"/><rect x="3" y="22" width="2" height="2" fill="#cf222e" fill-opacity="0.35"/><rect x="6" y="22" width="7" height="2" fill="#953800" fill-opacity="0.35"/><rect x="13" y="22" width="1" height="2" fill="#0969da" fill-opacity="0.35"/><rect x="14" y="22" width="7" height="2" fill="#1f2328" fill-opacity="0.35"/><rect x="22" y="22" width="5" height="2" fill="#953800" fill-opacity="0.35"/><rect x="28" y="22" width="1" height="2" fill="#cf222e" fill-opacity="0.35"/><rect x="30" y="22" width="4" height="2" fill="#0550ae" fill-opacity="0.35"/><rect x="34" y="22" width="1" height="2" fill="#0969da" fill-opacity="0.35"/><rect x="0" y="24" width="2" height="2" fill="#1f2328" fill-opacity="0.35"/><rect x="0" y="28" width="6" height="2" fill="#953800" fill-opacity="0.35"/><rect x="6" y="28" width="1" height="2" fill="#0969da" fill-opacity="0.35"/><rect x="7" y="28" width="2" height="2" fill="#1f2328" fill-opacity="0.35"/><rect x="9" y="28" width="1" height="2" fill="#0969da" fill-opacity="0.35"/><rect x="11" y="28" width="1" height="2" fill="#cf222e" fill-opacity="0.35"/><rect x="4" y="30" width="7" height="2" fill="#953800" fill-opacity="0.35"/><rect x="11" y="30" width="1" height="2" fill="#0969da" fill-opacity="0.35"/><rect x="12" y="30" width="3" height="2" fill="#953800" fill-opacity="0.35"/><rect x="15" y="30" width="1" height="2" fill="#1a7f37" fill-opacity="0.35"/><rect x="16" y="30" width="4" height="2" fill="#953800" fill-opacity="0.35"/><rect x="21" y="30" width="1" height="2" fill="#cf222e" fill-opacity="0.35"/><rect x="23" y="30" width="4" height="2" fill="#1f2328" fill-opacity="0.35"/><rect x="27" y="30" width="1" height="2" fill="#1a7f37" fill-opacity="0.35"/><rect x="28" y="30" width="1" height="2" fill="#1f2328" fill-opacity="0.35"/><rect x="30" y="30" width="5" height="2" fill="#953800" fill-opacity="0.35"/><rect x="36" y="30" width="1" height="2" fill="#cf222e" fill-opacity="0.35"/><rect x="38" y="30" width="3" height="2" fill="#0550ae" fill-opacity="0.35"/><rect x="41" y="30" width="1" height="2" fill="#1f2328" fill-opacity="0.35"/><rect x="43" y="30" width="3" height="2" fill="#953800" fill-opacity="0.35"/><rect x="47" y="30" width="1" height="2" fill="#cf222e" fill-opacity="0.35"/><rect x="49" y="30" width="1" height="2" fill="#0a3069" fill-opacity="0.35"/><rect x="50" y="30" width="1" height="2" fill="#1f2328" fill-opacity="0.35"/><rect x="51" y="30" width="6" height="2" fill="#0a3069" fill-opacity="0.35"/><rect x="57" y="30" width="1" height="2" fill="#0969da" fill-opacity="0.35"/><rect x="59" y="30" width="1" height="2" fill="#cf222e" fill-opacity="0.35"/><rect x="4" y="32" width="20" height="2" fill="#953800" fill-opacity="0.35"/><rect x="24" y="32" width="1" height="2" fill="#0969da" fill-opacity="0.35"/><rect x="25" y="32" width="4" height="2" fill="#953800" fill-opacity="0.35"/><rect x="30" y="32" width="1" height="2" fill="#cf222e" fill-opacity="0.35"/><rect x="32" y="32" width="6" height="2" fill="#0a3069" fill-opacity="0.35"/><rect x="38" y="32" width="1" height="2" fill="#0969da" fill-opacity="0.35"/><rect x="40" y="32" width="1" height="2" fill="#cf222e" fill-opacity="0.35"/><rect x="4" y="34" width="7" height="2" fill="#953800" fill-opacity="0.35"/><rect x="11" y="34" width="1" height="2" fill="#0969da" fill-opacity="0.35"/><rect x="12" y="34" width="9" height="2" fill="#0a3069" fill-opacity="0.35"/><rect x="22" y="34" width="2" height="2" fill="#0a3069" fill-opacity="0.35"/><rect x="25" y="34" width="5" height="2" fill="#0a3069" fill-opacity="0.35"/><rect x="31" y="34" width="9" height="2" fill="#0a3069" fill-opacity="0.35"/><rect x="40" y="34" width="1" height="2" fill="#0969da" fill-opacity="0.35"/><rect x="42" y="34" width="1" height="2" fill="#cf222e" fill-opacity="0.35"/><rect x="4" y="36" width="13" height="2" fill="#953800" fill-opacity="0.35"/><rect x="17" y="36" width="2" height="2" fill="#0969da" fill-opacity="0.35"/></svg><div class="a" style="left:1120px;top:352px;width:13px;height:2px;background:#0969da"></div><div class="a" style="left:1134px;top:108px;width:119px;height:35px;background:#fff;border-right:1px solid #d0d7de"></div><svg class="a" style="left:1144px;top:118px" width="15" height="15" viewBox="0 0 15 15"><path d="M1 0.5V14H14.5" fill="none" stroke="#424a53" stroke-width="1.1"/><rect x="3.3" y="5.5" width="2.2" height="6.6" fill="none" stroke="#424a53" stroke-width="1"/><rect x="7.3" y="7.5" width="2.2" height="4.6" fill="none" stroke="#424a53" stroke-width="1"/><rect x="11.3" y="1.8" width="2.2" height="10.3" fill="none" stroke="#424a53" stroke-width="1"/></svg><div class="a ui" style="left:1165px;top:117px;line-height:18px;color:#656d76">R Plot</div><svg class="a" style="left:1232px;top:120px" width="11" height="11"><path d="M1 1L10 10M10 1L1 10" stroke="#8c959f" stroke-width="1.1"/></svg><svg class="a" style="left:1888px;top:122px" width="16" height="6"><circle cx="2.5" cy="3" r="1.2" fill="#424a53"/><circle cx="8" cy="3" r="1.2" fill="#424a53"/><circle cx="13.5" cy="3" r="1.2" fill="#424a53"/></svg><div class="a" style="left:1909px;top:143px;width:9px;height:157px;background:#e6e8eb"></div>
<!--PLOT--><svg class="a" style="left:0;top:0" width="1918" height="1054"><line x1="1187" y1="326.5" x2="1827" y2="326.5" stroke="#ebebeb" stroke-width="1"/><line x1="1187" y1="366.5" x2="1827" y2="366.5" stroke="#ebebeb" stroke-width="1"/><line x1="1187" y1="406.5" x2="1827" y2="406.5" stroke="#ebebeb" stroke-width="1"/><line x1="1187" y1="446.5" x2="1827" y2="446.5" stroke="#ebebeb" stroke-width="1"/><line x1="1187" y1="487.5" x2="1827" y2="487.5" stroke="#ebebeb" stroke-width="1"/><line x1="1187" y1="527.5" x2="1827" y2="527.5" stroke="#ebebeb" stroke-width="1"/><line x1="1237.5" y1="309" x2="1237.5" y2="547" stroke="#ebebeb" stroke-width="1"/><line x1="1368.5" y1="309" x2="1368.5" y2="547" stroke="#ebebeb" stroke-width="1"/><line x1="1499.5" y1="309" x2="1499.5" y2="547" stroke="#ebebeb" stroke-width="1"/><line x1="1630.5" y1="309" x2="1630.5" y2="547" stroke="#ebebeb" stroke-width="1"/><line x1="1762.5" y1="309" x2="1762.5" y2="547" stroke="#ebebeb" stroke-width="1"/></svg><svg class="a" style="left:0;top:0" width="1918" height="1054"><polygon points="1216.8,447.4 1218.3,429.2 1222.9,426.9 1232.8,426.1 1235.8,423.1 1238.1,429.2 1256.3,426.9 1255.5,435.2 1245.7,436.0 1238.8,447.4" fill="#5889a0" stroke="#5889a0" stroke-width="2" stroke-linejoin="round"/><polygon points="1238.8,447.4 1245.7,436.0 1260.1,435.7 1269.2,447.4" fill="#6a4a8a" stroke="#6a4a8a" stroke-width="2" stroke-linejoin="round"/><polygon points="1235.8,414.7 1240.4,410.9 1252.5,411.7 1264.6,413.2 1261.6,419.3 1257.1,423.9 1255.5,426.9 1238.1,429.2 1235.8,423.1" fill="#6a6a9e" stroke="#6a6a9e" stroke-width="2" stroke-linejoin="round"/><polygon points="1241.9,408.7 1246.4,405.6 1254.0,402.3 1264.6,401.8 1272.2,400.3 1287.4,390.5 1292.0,392.0 1292.7,404.1 1279.1,410.2 1279.8,421.6 1257.1,424.6 1261.6,419.3 1264.6,413.2 1252.5,411.7 1240.4,410.9" fill="#529c9e" stroke="#529c9e" stroke-width="2" stroke-linejoin="round"/><polygon points="1256.3,426.9 1257.1,424.6 1279.8,421.6 1295.0,445.1 1296.5,446.6 1269.2,447.4 1260.1,435.7 1255.5,435.2" fill="#55989e" stroke="#55989e" stroke-width="2" stroke-linejoin="round"/><polygon points="1279.1,410.2 1292.7,404.9 1308.7,423.1 1301.1,443.6 1296.5,445.9 1283.6,429.9" fill="#539aa0" stroke="#539aa0" stroke-width="2" stroke-linejoin="round"/><polygon points="1287.4,390.5 1301.1,384.4 1306.4,384.4 1310.2,392.7 1319.3,414.7 1308.7,423.1 1292.7,404.9 1292.0,392.0" fill="#55a19e" stroke="#55a19e" stroke-width="2" stroke-linejoin="round"/><polygon points="1306.4,384.4 1310.2,370.7 1319.3,366.2 1326.9,363.1 1329.9,369.2 1337.5,368.4 1341.3,381.3 1319.3,390.5 1310.2,392.0" fill="#5789a0" stroke="#5789a0" stroke-width="2" stroke-linejoin="round"/><polygon points="1310.2,392.7 1319.3,390.5 1341.3,382.1 1347.4,383.6 1350.4,391.2 1350.4,399.6 1355.7,405.6 1351.2,410.2 1343.6,408.7 1336.0,411.7 1319.3,412.5 1316.3,401.1" fill="#62bf96" stroke="#62bf96" stroke-width="2" stroke-linejoin="round"/><polygon points="1301.1,443.6 1308.7,423.1 1319.3,414.7 1331.4,433.0 1328.4,433.7 1323.1,437.5" fill="#6a77a0" stroke="#6a77a0" stroke-width="2" stroke-linejoin="round"/><polygon points="1319.3,413.2 1336.0,411.7 1343.6,408.7 1351.2,410.2 1349.7,419.3 1345.1,430.7 1331.4,433.7" fill="#6676a0" stroke="#6676a0" stroke-width="2" stroke-linejoin="round"/><polygon points="1345.9,431.4 1347.4,423.1 1352.7,416.3 1361.8,416.3 1370.9,428.4 1370.9,431.4" fill="#6b4a88" stroke="#6b4a88" stroke-width="2" stroke-linejoin="round"/><polygon points="1351.2,410.2 1355.7,405.6 1377.0,399.6 1387.6,398.0 1389.1,407.2 1384.6,431.4 1370.9,431.4 1361.8,416.3 1352.7,416.3" fill="#52a69e" stroke="#52a69e" stroke-width="2" stroke-linejoin="round"/><polygon points="1336.8,369.2 1343.6,360.1 1351.2,373.8 1358.8,379.8 1353.5,389.7 1348.1,382.9 1341.3,381.3" fill="#6a68a0" stroke="#6a68a0" stroke-width="2" stroke-linejoin="round"/><polygon points="1343.6,360.1 1355.7,355.5 1361.8,357.1 1368.6,376.0 1360.3,379.8 1351.2,373.8" fill="#6b4c88" stroke="#6b4c88" stroke-width="2" stroke-linejoin="round"/><polygon points="1361.8,357.1 1375.5,344.9 1386.1,361.6 1381.5,369.2 1372.4,367.7 1369.4,375.3" fill="#6b5088" stroke="#6b5088" stroke-width="2" stroke-linejoin="round"/><polygon points="1350.4,392.0 1358.8,379.8 1369.4,375.3 1372.4,381.3 1379.3,398.0 1377.0,404.1 1367.9,404.1 1354.2,405.6 1350.4,399.6" fill="#5a8aa0" stroke="#5a8aa0" stroke-width="2" stroke-linejoin="round"/><polygon points="1369.4,376.8 1373.9,367.7 1381.5,370.0 1396.7,384.4 1408.9,386.7 1402.8,401.1 1389.1,401.1 1380.0,399.6 1372.4,381.3" fill="#55a0a0" stroke="#55a0a0" stroke-width="2" stroke-linejoin="round"/><polygon points="1381.5,369.2 1386.1,360.1 1398.2,357.8 1407.3,362.4 1411.9,372.2 1411.9,384.4 1396.7,384.4" fill="#568ea3" stroke="#568ea3" stroke-width="2" stroke-linejoin="round"/><polygon points="1386.1,337.3 1390.6,319.9 1411.9,320.9 1418.0,336.6 1404.3,347.2 1396.7,341.1" fill="#5889a0" stroke="#5889a0" stroke-width="2" stroke-linejoin="round"/><polygon points="1411.9,320.9 1440.0,322.1 1434.7,335.8 1427.1,332.8 1418.0,336.6" fill="#6b4c88" stroke="#6b4c88" stroke-width="2" stroke-linejoin="round"/><polygon points="1375.5,344.9 1386.1,337.3 1396.7,341.1 1404.3,347.2 1402.8,354.0 1399.8,357.1 1386.1,358.6 1383.1,361.6" fill="#6868a0" stroke="#6868a0" stroke-width="2" stroke-linejoin="round"/><polygon points="1399.8,357.1 1404.3,351.0 1411.9,338.8 1427.1,332.8 1442.3,338.1 1442.3,361.6 1427.1,363.9 1413.4,366.9" fill="#8dd67c" stroke="#8dd67c" stroke-width="2" stroke-linejoin="round"/><polygon points="1413.4,366.9 1433.1,364.6 1428.6,382.9 1412.7,381.3" fill="#6b4c88" stroke="#6b4c88" stroke-width="2" stroke-linejoin="round"/><polygon points="1401.3,401.1 1410.4,385.9 1422.5,382.9 1430.1,384.4 1437.7,396.5 1437.7,402.6" fill="#5a82a0" stroke="#5a82a0" stroke-width="2" stroke-linejoin="round"/><polygon points="1400.5,402.6 1437.7,403.4 1437.7,414.7 1405.8,413.2" fill="#6a68a0" stroke="#6a68a0" stroke-width="2" stroke-linejoin="round"/><polygon points="1405.8,414.0 1437.7,415.5 1434.7,433.7 1414.2,433.0" fill="#6a6c9e" stroke="#6a6c9e" stroke-width="2" stroke-linejoin="round"/><polygon points="1384.6,431.4 1389.1,402.6 1400.5,402.6 1413.4,433.0" fill="#5890a0" stroke="#5890a0" stroke-width="2" stroke-linejoin="round"/><polygon points="1433.1,364.6 1443.8,361.6 1443.8,461.8 1431.6,442.1 1434.7,434.5 1437.7,416.3 1437.7,396.5 1428.6,382.9" fill="#50ae9e" stroke="#50ae9e" stroke-width="2" stroke-linejoin="round"/><polygon points="1440.0,322.1 1443.8,322.1 1443.8,361.6 1442.3,361.6 1442.3,338.1 1434.7,335.8" fill="#50a69e" stroke="#50a69e" stroke-width="2" stroke-linejoin="round"/><polygon points="1440.0,322.5 1470.8,323.2 1469.6,346.4 1453.7,345.3 1442.3,347.6 1440.0,347.6" fill="#50a69e" stroke="#50a69e" stroke-width="2" stroke-linejoin="round"/><polygon points="1470.8,323.2 1498.1,323.2 1498.1,346.4 1469.6,346.4" fill="#5889a0" stroke="#5889a0" stroke-width="2" stroke-linejoin="round"/><polygon points="1498.1,323.2 1531.1,323.2 1531.1,347.6 1498.1,346.4" fill="#4fb0a0" stroke="#4fb0a0" stroke-width="2" stroke-linejoin="round"/><polygon points="1531.1,323.2 1556.2,323.2 1555.0,347.6 1531.1,347.6" fill="#5a88a3" stroke="#5a88a3" stroke-width="2" stroke-linejoin="round"/><polygon points="1556.2,323.2 1579.0,323.2 1577.8,348.7 1555.0,347.6" fill="#5e84a3" stroke="#5e84a3" stroke-width="2" stroke-linejoin="round"/><polygon points="1579.0,323.2 1599.5,323.7 1597.2,353.3 1594.9,363.5 1583.5,362.4 1577.8,348.7" fill="#52a69e" stroke="#52a69e" stroke-width="2" stroke-linejoin="round"/><polygon points="1599.5,323.7 1610.8,323.2 1612.0,344.2 1604.0,353.3 1597.2,353.3" fill="#6b5490" stroke="#6b5490" stroke-width="2" stroke-linejoin="round"/><polygon points="1610.8,323.2 1638.2,323.2 1634.8,351.0 1613.1,346.4" fill="#5888a0" stroke="#5888a0" stroke-width="2" stroke-linejoin="round"/><polygon points="1442.3,347.6 1453.7,345.3 1469.6,346.4 1466.2,362.4 1453.7,362.4 1442.3,360.1" fill="#6a69a0" stroke="#6a69a0" stroke-width="2" stroke-linejoin="round"/><polygon points="1469.6,346.4 1498.1,346.4 1496.9,364.7 1474.2,368.1 1466.2,362.4" fill="#5e80a3" stroke="#5e80a3" stroke-width="2" stroke-linejoin="round"/><polygon points="1498.1,346.4 1531.1,347.6 1530.0,374.9 1496.9,373.8" fill="#5fbf96" stroke="#5fbf96" stroke-width="2" stroke-linejoin="round"/><polygon points="1531.1,347.6 1548.2,347.6 1547.1,378.3 1531.1,378.3" fill="#5a88a3" stroke="#5a88a3" stroke-width="2" stroke-linejoin="round"/><polygon points="1548.2,347.6 1568.7,348.7 1565.3,378.3 1547.1,378.3" fill="#6080a3" stroke="#6080a3" stroke-width="2" stroke-linejoin="round"/><polygon points="1568.7,348.7 1577.8,348.7 1583.5,362.4 1582.4,370.4 1575.5,378.3 1565.3,378.3" fill="#6a5696" stroke="#6a5696" stroke-width="2" stroke-linejoin="round"/><polygon points="1440.0,347.6 1442.3,347.6 1442.3,360.1 1453.7,362.4 1450.3,385.2 1451.4,405.7 1440.0,405.7" fill="#50a69e" stroke="#50a69e" stroke-width="2" stroke-linejoin="round"/><polygon points="1453.7,362.4 1466.2,362.4 1474.2,368.1 1476.4,376.1 1468.5,382.9 1454.8,378.3" fill="#6b4f8c" stroke="#6b4f8c" stroke-width="2" stroke-linejoin="round"/><polygon points="1474.2,368.1 1496.9,364.7 1495.8,405.7 1486.7,405.7 1478.7,389.7 1468.5,382.9 1476.4,376.1" fill="#52a69e" stroke="#52a69e" stroke-width="2" stroke-linejoin="round"/><polygon points="1450.3,385.2 1454.8,378.3 1468.5,382.9 1478.7,389.7 1486.7,405.7 1451.4,405.7" fill="#5592a0" stroke="#5592a0" stroke-width="2" stroke-linejoin="round"/><polygon points="1496.9,373.8 1530.0,374.9 1530.0,405.7 1495.8,405.7" fill="#8cd67c" stroke="#8cd67c" stroke-width="2" stroke-linejoin="round"/><polygon points="1530.0,378.3 1571.0,378.3 1567.6,396.6 1556.2,397.7 1542.5,406.8 1530.0,405.7" fill="#70c68c" stroke="#70c68c" stroke-width="2" stroke-linejoin="round"/><polygon points="1571.0,378.3 1583.5,362.4 1597.2,363.5 1613.1,376.1 1615.4,382.9 1585.8,404.5 1567.6,396.6" fill="#c4e06e" stroke="#c4e06e" stroke-width="2" stroke-linejoin="round"/><polygon points="1585.8,404.5 1615.4,382.9 1620.0,387.4 1624.5,401.1 1617.7,421.6 1604.0,426.2 1594.9,421.6 1581.2,401.1" fill="#a4da74" stroke="#a4da74" stroke-width="2" stroke-linejoin="round"/><polygon points="1542.5,406.8 1556.2,397.7 1566.4,405.7 1552.8,421.6" fill="#6b4f8c" stroke="#6b4f8c" stroke-width="2" stroke-linejoin="round"/><polygon points="1440.0,405.7 1451.4,405.7 1449.1,414.8 1462.8,430.7 1446.8,446.7 1440.0,439.8" fill="#50a69e" stroke="#50a69e" stroke-width="2" stroke-linejoin="round"/><polygon points="1449.1,406.8 1478.7,406.8 1468.5,430.7 1462.8,430.7 1450.3,414.8" fill="#6a6aa0" stroke="#6a6aa0" stroke-width="2" stroke-linejoin="round"/><polygon points="1478.7,406.8 1491.3,406.8 1495.8,417.1 1493.5,433.0 1489.0,434.1 1481.0,433.0 1468.5,430.7" fill="#6374a0" stroke="#6374a0" stroke-width="2" stroke-linejoin="round"/><polygon points="1491.3,406.8 1516.3,406.8 1519.7,426.2 1524.3,434.1 1503.8,436.4 1494.7,433.0 1495.8,417.1" fill="#5888a0" stroke="#5888a0" stroke-width="2" stroke-linejoin="round"/><polygon points="1516.3,406.8 1542.5,406.8 1552.8,421.6 1558.5,430.7 1536.8,444.4 1531.1,442.1 1524.3,434.1 1519.7,426.2" fill="#72c68a" stroke="#72c68a" stroke-width="2" stroke-linejoin="round"/><polygon points="1552.8,421.6 1566.4,405.7 1581.2,401.1 1594.9,421.6 1581.2,427.3 1558.5,430.7" fill="#4fb0a0" stroke="#4fb0a0" stroke-width="2" stroke-linejoin="round"/><polygon points="1446.8,446.7 1462.8,430.7 1481.0,433.0 1478.7,461.5 1448.0,460.3" fill="#54b89c" stroke="#54b89c" stroke-width="2" stroke-linejoin="round"/><polygon points="1481.0,433.0 1494.7,433.0 1503.8,436.4 1509.5,455.8 1506.1,461.5 1478.7,461.5" fill="#52a69e" stroke="#52a69e" stroke-width="2" stroke-linejoin="round"/><polygon points="1503.8,436.4 1524.3,434.1 1531.1,442.1 1533.4,446.7 1523.1,462.6 1506.1,461.5 1509.5,455.8" fill="#5890a0" stroke="#5890a0" stroke-width="2" stroke-linejoin="round"/><polygon points="1523.1,462.6 1533.4,446.7 1540.2,447.8 1543.6,464.9 1535.7,475.1" fill="#6a69a0" stroke="#6a69a0" stroke-width="2" stroke-linejoin="round"/><polygon points="1536.8,444.4 1558.5,430.7 1563.0,452.4 1551.6,460.3 1543.6,464.9 1540.2,447.8" fill="#6676a0" stroke="#6676a0" stroke-width="2" stroke-linejoin="round"/><polygon points="1558.5,430.7 1581.2,427.3 1590.3,428.5 1588.1,442.1 1597.2,459.2 1572.1,460.3 1563.0,452.4" fill="#5ebd98" stroke="#5ebd98" stroke-width="2" stroke-linejoin="round"/><polygon points="1590.3,428.5 1594.9,421.6 1604.0,426.2 1613.1,426.2 1620.0,433.0 1621.1,469.5 1615.4,483.1 1599.5,460.3 1588.1,442.1" fill="#fce45c" stroke="#fce45c" stroke-width="2" stroke-linejoin="round"/><polygon points="1535.7,475.1 1543.6,464.9 1551.6,460.3 1563.0,452.4 1579.0,472.9 1575.5,490.0 1560.7,501.3" fill="#f8e466" stroke="#f8e466" stroke-width="2" stroke-linejoin="round"/><polygon points="1572.1,460.3 1597.2,459.2 1615.4,483.1 1620.0,491.1 1608.6,497.9 1581.2,491.1 1575.5,490.0 1579.0,472.9" fill="#d4e270" stroke="#d4e270" stroke-width="2" stroke-linejoin="round"/><polygon points="1560.7,501.3 1575.5,490.0 1608.6,497.9 1615.4,501.3 1597.2,515.0 1589.2,529.8" fill="#f8e466" stroke="#f8e466" stroke-width="2" stroke-linejoin="round"/><polygon points="1589.2,529.8 1597.2,515.0 1615.4,501.3 1629.1,499.1 1634.8,528.7 1629.1,534.4 1592.6,536.7" fill="#aadc74" stroke="#aadc74" stroke-width="2" stroke-linejoin="round"/><polygon points="1620.0,433.0 1640.0,433.0 1640.0,469.5 1621.1,469.5" fill="#98d878" stroke="#98d878" stroke-width="2" stroke-linejoin="round"/><polygon points="1615.4,483.1 1621.1,469.5 1640.0,469.5 1640.0,499.1 1629.1,499.1 1620.0,491.1" fill="#bce070" stroke="#bce070" stroke-width="2" stroke-linejoin="round"/><polygon points="1613.1,346.4 1634.8,351.0 1629.1,355.6 1620.0,373.8 1615.4,382.9 1613.1,376.1 1597.2,363.5 1604.0,353.3 1612.0,344.2" fill="#5492a0" stroke="#5492a0" stroke-width="2" stroke-linejoin="round"/><polygon points="1629.1,355.6 1640.0,351.0 1640.0,380.6 1620.0,387.4 1615.4,382.9" fill="#52a3a0" stroke="#52a3a0" stroke-width="2" stroke-linejoin="round"/><polygon points="1620.0,387.4 1640.0,380.6 1640.0,400.0 1624.5,401.1" fill="#6676a0" stroke="#6676a0" stroke-width="2" stroke-linejoin="round"/><polygon points="1617.7,421.6 1624.5,401.1 1640.0,400.0 1640.0,434.1 1613.1,426.2" fill="#54a0a0" stroke="#54a0a0" stroke-width="2" stroke-linejoin="round"/><polygon points="1630.0,322.6 1637.2,322.6 1635.4,326.2 1631.8,349.6 1630.0,351.4" fill="#5888a0" stroke="#5888a0" stroke-width="2" stroke-linejoin="round"/><polygon points="1637.2,322.6 1689.5,322.6 1691.3,328.0 1687.7,329.8 1684.1,346.0 1677.7,350.5 1671.4,348.7 1667.8,342.4 1658.8,337.0 1657.0,329.8 1643.5,326.2" fill="#4fb0a0" stroke="#4fb0a0" stroke-width="2" stroke-linejoin="round"/><polygon points="1635.4,326.2 1643.5,326.2 1657.0,329.8 1658.8,337.0 1667.8,342.4 1672.3,349.6 1678.6,350.5 1680.5,358.6 1669.6,365.9 1661.5,362.3 1649.8,355.0 1631.8,349.6" fill="#79ca86" stroke="#79ca86" stroke-width="2" stroke-linejoin="round"/><polygon points="1689.5,322.6 1702.1,322.6 1699.4,329.8 1702.1,335.2 1714.7,346.0 1684.1,346.0 1687.7,329.8 1691.3,328.0" fill="#6676a0" stroke="#6676a0" stroke-width="2" stroke-linejoin="round"/><polygon points="1702.1,322.6 1727.3,322.6 1730.9,337.0 1714.7,342.4 1702.1,335.2 1700.3,329.8" fill="#6676a0" stroke="#6676a0" stroke-width="2" stroke-linejoin="round"/><polygon points="1677.7,350.5 1684.1,346.9 1714.7,346.9 1713.8,356.8 1716.5,367.7 1712.9,373.1 1705.7,381.2 1702.1,374.9 1697.6,379.4 1693.1,372.2 1684.1,369.5 1671.4,365.0" fill="#72c68a" stroke="#72c68a" stroke-width="2" stroke-linejoin="round"/><polygon points="1715.6,343.3 1722.8,340.6 1723.7,357.7 1733.6,361.4 1723.7,365.0 1716.5,359.5" fill="#6b2a78" stroke="#6b2a78" stroke-width="2" stroke-linejoin="round"/><polygon points="1722.8,339.7 1730.9,337.0 1743.5,356.8 1733.6,358.6 1723.7,357.7" fill="#6b4a88" stroke="#6b4a88" stroke-width="2" stroke-linejoin="round"/><polygon points="1727.3,322.6 1741.7,322.6 1754.3,335.2 1754.3,353.2 1745.3,349.6 1730.9,328.0" fill="#6b4a88" stroke="#6b4a88" stroke-width="2" stroke-linejoin="round"/><polygon points="1741.7,322.6 1759.7,322.6 1765.1,335.2 1764.2,351.4 1754.3,338.8" fill="#6b5088" stroke="#6b5088" stroke-width="2" stroke-linejoin="round"/><polygon points="1630.0,351.4 1631.8,349.6 1649.8,355.0 1643.5,379.4 1630.0,382.1" fill="#50a0a0" stroke="#50a0a0" stroke-width="2" stroke-linejoin="round"/><polygon points="1649.8,355.0 1661.5,362.3 1671.4,365.0 1674.1,379.4 1666.0,382.1 1651.6,392.9 1647.1,380.3 1643.5,379.4" fill="#529ea0" stroke="#529ea0" stroke-width="2" stroke-linejoin="round"/><polygon points="1671.4,365.0 1684.1,369.5 1693.1,372.2 1697.6,379.4 1702.1,374.9 1705.7,381.2 1709.3,376.7 1707.5,387.5 1698.5,393.8 1684.1,387.5 1674.1,380.3" fill="#5592a0" stroke="#5592a0" stroke-width="2" stroke-linejoin="round"/><polygon points="1709.3,374.0 1730.9,369.5 1738.1,371.3 1734.5,390.2 1707.5,390.2" fill="#6274a0" stroke="#6274a0" stroke-width="2" stroke-linejoin="round"/><polygon points="1738.1,371.3 1756.1,369.5 1759.7,374.9 1757.9,389.3 1748.9,392.9 1747.1,398.3 1743.5,391.1 1734.5,390.2" fill="#6277a0" stroke="#6277a0" stroke-width="2" stroke-linejoin="round"/><polygon points="1763.3,375.8 1774.1,373.1 1778.6,378.5 1779.5,393.8 1776.8,399.2 1761.5,392.0" fill="#6274a0" stroke="#6274a0" stroke-width="2" stroke-linejoin="round"/><polygon points="1630.0,382.1 1643.5,379.4 1647.1,380.3 1651.6,392.9 1642.6,400.1 1630.0,398.3" fill="#6a6aa0" stroke="#6a6aa0" stroke-width="2" stroke-linejoin="round"/><polygon points="1651.6,392.9 1666.0,382.1 1674.1,380.3 1684.1,387.5 1689.5,401.9 1684.1,405.5 1683.2,414.5 1674.1,419.9 1667.8,414.5 1664.2,403.7 1658.8,401.0" fill="#5ebd98" stroke="#5ebd98" stroke-width="2" stroke-linejoin="round"/><polygon points="1684.1,389.3 1698.5,393.8 1707.5,390.2 1720.1,391.1 1721.9,396.5 1729.1,401.9 1720.1,404.6 1719.2,412.7 1707.5,409.1 1691.3,401.9 1689.5,401.9" fill="#a0da78" stroke="#a0da78" stroke-width="2" stroke-linejoin="round"/><polygon points="1721.9,391.1 1734.5,390.2 1747.1,398.3 1748.9,392.9 1759.7,392.0 1768.7,394.7 1763.3,405.5 1752.5,418.1 1730.9,412.7 1732.7,403.7 1729.1,401.9" fill="#5abd98" stroke="#5abd98" stroke-width="2" stroke-linejoin="round"/><polygon points="1642.6,400.1 1651.6,392.9 1658.8,401.0 1664.2,403.7 1667.8,414.5 1663.3,418.1 1653.4,419.0 1644.4,416.3" fill="#6b4f8c" stroke="#6b4f8c" stroke-width="2" stroke-linejoin="round"/><polygon points="1630.0,398.3 1642.6,400.1 1644.4,416.3 1641.7,434.3 1630.0,433.4" fill="#52a3a0" stroke="#52a3a0" stroke-width="2" stroke-linejoin="round"/><polygon points="1685.9,403.7 1691.3,401.9 1707.5,409.1 1719.2,412.7 1720.1,423.5 1711.1,430.7 1698.5,430.7 1687.7,414.5" fill="#a0da78" stroke="#a0da78" stroke-width="2" stroke-linejoin="round"/><polygon points="1641.7,418.1 1653.4,419.0 1663.3,418.1 1667.8,421.7 1666.0,428.9 1661.5,436.1 1649.8,445.1 1641.7,436.1" fill="#6676a0" stroke="#6676a0" stroke-width="2" stroke-linejoin="round"/><polygon points="1667.8,421.7 1674.1,419.9 1684.1,414.5 1687.7,414.5 1702.1,428.9 1698.5,434.3 1700.3,439.7 1689.5,441.5 1684.1,440.6 1664.2,428.9" fill="#5ebd98" stroke="#5ebd98" stroke-width="2" stroke-linejoin="round"/><polygon points="1698.5,430.7 1711.1,428.9 1725.5,422.6 1728.2,427.1 1721.9,434.3 1718.3,445.1 1707.5,447.8 1700.3,441.5" fill="#6a69a0" stroke="#6a69a0" stroke-width="2" stroke-linejoin="round"/><polygon points="1649.8,445.1 1661.5,436.1 1664.2,428.9 1684.1,440.6 1689.5,441.5 1687.7,463.2 1675.0,454.1 1653.4,448.7" fill="#5592a0" stroke="#5592a0" stroke-width="2" stroke-linejoin="round"/><polygon points="1689.5,442.4 1697.6,443.3 1703.9,452.3 1720.1,455.0 1716.5,457.7 1689.5,460.5" fill="#72c68a" stroke="#72c68a" stroke-width="2" stroke-linejoin="round"/><polygon points="1687.7,463.2 1716.5,457.7 1720.1,450.5 1732.7,446.9 1734.5,450.5 1740.8,450.5 1723.7,468.6 1694.9,471.3 1689.5,468.6" fill="#5592a0" stroke="#5592a0" stroke-width="2" stroke-linejoin="round"/><polygon points="1630.0,433.4 1641.7,434.3 1641.7,436.1 1649.8,445.1 1653.4,448.7 1653.4,470.4 1630.0,470.4" fill="#a0da78" stroke="#a0da78" stroke-width="2" stroke-linejoin="round"/><polygon points="1653.4,448.7 1675.0,454.1 1687.7,463.2 1689.5,468.6 1687.7,472.2 1659.7,490.2 1654.3,470.4" fill="#88d47e" stroke="#88d47e" stroke-width="2" stroke-linejoin="round"/><defs><clipPath id="c2"><rect x="1441" y="0" width="477" height="1054"/></clipPath><clipPath id="c3"><rect x="1631" y="0" width="287" height="1054"/></clipPath></defs><g><polygon points="1216.8,447.4 1218.3,429.2 1222.9,426.9 1232.8,426.1 1235.8,423.1 1238.1,429.2 1256.3,426.9 1255.5,435.2 1245.7,436.0 1238.8,447.4" fill="#5889a0" stroke="#fff" stroke-opacity="0.75" stroke-width="0.5" stroke-linejoin="round"/><polygon points="1238.8,447.4 1245.7,436.0 1260.1,435.7 1269.2,447.4" fill="#6a4a8a" stroke="#fff" stroke-opacity="0.75" stroke-width="0.5" stroke-linejoin="round"/><polygon points="1235.8,414.7 1240.4,410.9 1252.5,411.7 1264.6,413.2 1261.6,419.3 1257.1,423.9 1255.5,426.9 1238.1,429.2 1235.8,423.1" fill="#6a6a9e" stroke="#fff" stroke-opacity="0.75" stroke-width="0.5" stroke-linejoin="round"/><polygon points="1241.9,408.7 1246.4,405.6 1254.0,402.3 1264.6,401.8 1272.2,400.3 1287.4,390.5 1292.0,392.0 1292.7,404.1 1279.1,410.2 1279.8,421.6 1257.1,424.6 1261.6,419.3 1264.6,413.2 1252.5,411.7 1240.4,410.9" fill="#529c9e" stroke="#fff" stroke-opacity="0.75" stroke-width="0.5" stroke-linejoin="round"/><polygon points="1256.3,426.9 1257.1,424.6 1279.8,421.6 1295.0,445.1 1296.5,446.6 1269.2,447.4 1260.1,435.7 1255.5,435.2" fill="#55989e" stroke="#fff" stroke-opacity="0.75" stroke-width="0.5" stroke-linejoin="round"/><polygon points="1279.1,410.2 1292.7,404.9 1308.7,423.1 1301.1,443.6 1296.5,445.9 1283.6,429.9" fill="#539aa0" stroke="#fff" stroke-opacity="0.75" stroke-width="0.5" stroke-linejoin="round"/><polygon points="1287.4,390.5 1301.1,384.4 1306.4,384.4 1310.2,392.7 1319.3,414.7 1308.7,423.1 1292.7,404.9 1292.0,392.0" fill="#55a19e" stroke="#fff" stroke-opacity="0.75" stroke-width="0.5" stroke-linejoin="round"/><polygon points="1306.4,384.4 1310.2,370.7 1319.3,366.2 1326.9,363.1 1329.9,369.2 1337.5,368.4 1341.3,381.3 1319.3,390.5 1310.2,392.0" fill="#5789a0" stroke="#fff" stroke-opacity="0.75" stroke-width="0.5" stroke-linejoin="round"/><polygon points="1310.2,392.7 1319.3,390.5 1341.3,382.1 1347.4,383.6 1350.4,391.2 1350.4,399.6 1355.7,405.6 1351.2,410.2 1343.6,408.7 1336.0,411.7 1319.3,412.5 1316.3,401.1" fill="#62bf96" stroke="#fff" stroke-opacity="0.75" stroke-width="0.5" stroke-linejoin="round"/><polygon points="1301.1,443.6 1308.7,423.1 1319.3,414.7 1331.4,433.0 1328.4,433.7 1323.1,437.5" fill="#6a77a0" stroke="#fff" stroke-opacity="0.75" stroke-width="0.5" stroke-linejoin="round"/><polygon points="1319.3,413.2 1336.0,411.7 1343.6,408.7 1351.2,410.2 1349.7,419.3 1345.1,430.7 1331.4,433.7" fill="#6676a0" stroke="#fff" stroke-opacity="0.75" stroke-width="0.5" stroke-linejoin="round"/><polygon points="1345.9,431.4 1347.4,423.1 1352.7,416.3 1361.8,416.3 1370.9,428.4 1370.9,431.4" fill="#6b4a88" stroke="#fff" stroke-opacity="0.75" stroke-width="0.5" stroke-linejoin="round"/><polygon points="1351.2,410.2 1355.7,405.6 1377.0,399.6 1387.6,398.0 1389.1,407.2 1384.6,431.4 1370.9,431.4 1361.8,416.3 1352.7,416.3" fill="#52a69e" stroke="#fff" stroke-opacity="0.75" stroke-width="0.5" stroke-linejoin="round"/><polygon points="1336.8,369.2 1343.6,360.1 1351.2,373.8 1358.8,379.8 1353.5,389.7 1348.1,382.9 1341.3,381.3" fill="#6a68a0" stroke="#fff" stroke-opacity="0.75" stroke-width="0.5" stroke-linejoin="round"/><polygon points="1343.6,360.1 1355.7,355.5 1361.8,357.1 1368.6,376.0 1360.3,379.8 1351.2,373.8" fill="#6b4c88" stroke="#fff" stroke-opacity="0.75" stroke-width="0.5" stroke-linejoin="round"/><polygon points="1361.8,357.1 1375.5,344.9 1386.1,361.6 1381.5,369.2 1372.4,367.7 1369.4,375.3" fill="#6b5088" stroke="#fff" stroke-opacity="0.75" stroke-width="0.5" stroke-linejoin="round"/><polygon points="1350.4,392.0 1358.8,379.8 1369.4,375.3 1372.4,381.3 1379.3,398.0 1377.0,404.1 1367.9,404.1 1354.2,405.6 1350.4,399.6" fill="#5a8aa0" stroke="#fff" stroke-opacity="0.75" stroke-width="0.5" stroke-linejoin="round"/><polygon points="1369.4,376.8 1373.9,367.7 1381.5,370.0 1396.7,384.4 1408.9,386.7 1402.8,401.1 1389.1,401.1 1380.0,399.6 1372.4,381.3" fill="#55a0a0" stroke="#fff" stroke-opacity="0.75" stroke-width="0.5" stroke-linejoin="round"/><polygon points="1381.5,369.2 1386.1,360.1 1398.2,357.8 1407.3,362.4 1411.9,372.2 1411.9,384.4 1396.7,384.4" fill="#568ea3" stroke="#fff" stroke-opacity="0.75" stroke-width="0.5" stroke-linejoin="round"/><polygon points="1386.1,337.3 1390.6,319.9 1411.9,320.9 1418.0,336.6 1404.3,347.2 1396.7,341.1" fill="#5889a0" stroke="#fff" stroke-opacity="0.75" stroke-width="0.5" stroke-linejoin="round"/><polygon points="1411.9,320.9 1440.0,322.1 1434.7,335.8 1427.1,332.8 1418.0,336.6" fill="#6b4c88" stroke="#fff" stroke-opacity="0.75" stroke-width="0.5" stroke-linejoin="round"/><polygon points="1375.5,344.9 1386.1,337.3 1396.7,341.1 1404.3,347.2 1402.8,354.0 1399.8,357.1 1386.1,358.6 1383.1,361.6" fill="#6868a0" stroke="#fff" stroke-opacity="0.75" stroke-width="0.5" stroke-linejoin="round"/><polygon points="1399.8,357.1 1404.3,351.0 1411.9,338.8 1427.1,332.8 1442.3,338.1 1442.3,361.6 1427.1,363.9 1413.4,366.9" fill="#8dd67c" stroke="#fff" stroke-opacity="0.75" stroke-width="0.5" stroke-linejoin="round"/><polygon points="1413.4,366.9 1433.1,364.6 1428.6,382.9 1412.7,381.3" fill="#6b4c88" stroke="#fff" stroke-opacity="0.75" stroke-width="0.5" stroke-linejoin="round"/><polygon points="1401.3,401.1 1410.4,385.9 1422.5,382.9 1430.1,384.4 1437.7,396.5 1437.7,402.6" fill="#5a82a0" stroke="#fff" stroke-opacity="0.75" stroke-width="0.5" stroke-linejoin="round"/><polygon points="1400.5,402.6 1437.7,403.4 1437.7,414.7 1405.8,413.2" fill="#6a68a0" stroke="#fff" stroke-opacity="0.75" stroke-width="0.5" stroke-linejoin="round"/><polygon points="1405.8,414.0 1437.7,415.5 1434.7,433.7 1414.2,433.0" fill="#6a6c9e" stroke="#fff" stroke-opacity="0.75" stroke-width="0.5" stroke-linejoin="round"/><polygon points="1384.6,431.4 1389.1,402.6 1400.5,402.6 1413.4,433.0" fill="#5890a0" stroke="#fff" stroke-opacity="0.75" stroke-width="0.5" stroke-linejoin="round"/><polygon points="1433.1,364.6 1443.8,361.6 1443.8,461.8 1431.6,442.1 1434.7,434.5 1437.7,416.3 1437.7,396.5 1428.6,382.9" fill="#50ae9e" stroke="#fff" stroke-opacity="0.75" stroke-width="0.5" stroke-linejoin="round"/><polygon points="1440.0,322.1 1443.8,322.1 1443.8,361.6 1442.3,361.6 1442.3,338.1 1434.7,335.8" fill="#50a69e" stroke="#fff" stroke-opacity="0.75" stroke-width="0.5" stroke-linejoin="round"/></g><g clip-path="url(#c2)"><polygon points="1440.0,322.5 1470.8,323.2 1469.6,346.4 1453.7,345.3 1442.3,347.6 1440.0,347.6" fill="#50a69e" stroke="#fff" stroke-opacity="0.75" stroke-width="0.5" stroke-linejoin="round"/><polygon points="1470.8,323.2 1498.1,323.2 1498.1,346.4 1469.6,346.4" fill="#5889a0" stroke="#fff" stroke-opacity="0.75" stroke-width="0.5" stroke-linejoin="round"/><polygon points="1498.1,323.2 1531.1,323.2 1531.1,347.6 1498.1,346.4" fill="#4fb0a0" stroke="#fff" stroke-opacity="0.75" stroke-width="0.5" stroke-linejoin="round"/><polygon points="1531.1,323.2 1556.2,323.2 1555.0,347.6 1531.1,347.6" fill="#5a88a3" stroke="#fff" stroke-opacity="0.75" stroke-width="0.5" stroke-linejoin="round"/><polygon points="1556.2,323.2 1579.0,323.2 1577.8,348.7 1555.0,347.6" fill="#5e84a3" stroke="#fff" stroke-opacity="0.75" stroke-width="0.5" stroke-linejoin="round"/><polygon points="1579.0,323.2 1599.5,323.7 1597.2,353.3 1594.9,363.5 1583.5,362.4 1577.8,348.7" fill="#52a69e" stroke="#fff" stroke-opacity="0.75" stroke-width="0.5" stroke-linejoin="round"/><polygon points="1599.5,323.7 1610.8,323.2 1612.0,344.2 1604.0,353.3 1597.2,353.3" fill="#6b5490" stroke="#fff" stroke-opacity="0.75" stroke-width="0.5" stroke-linejoin="round"/><polygon points="1610.8,323.2 1638.2,323.2 1634.8,351.0 1613.1,346.4" fill="#5888a0" stroke="#fff" stroke-opacity="0.75" stroke-width="0.5" stroke-linejoin="round"/><polygon points="1442.3,347.6 1453.7,345.3 1469.6,346.4 1466.2,362.4 1453.7,362.4 1442.3,360.1" fill="#6a69a0" stroke="#fff" stroke-opacity="0.75" stroke-width="0.5" stroke-linejoin="round"/><polygon points="1469.6,346.4 1498.1,346.4 1496.9,364.7 1474.2,368.1 1466.2,362.4" fill="#5e80a3" stroke="#fff" stroke-opacity="0.75" stroke-width="0.5" stroke-linejoin="round"/><polygon points="1498.1,346.4 1531.1,347.6 1530.0,374.9 1496.9,373.8" fill="#5fbf96" stroke="#fff" stroke-opacity="0.75" stroke-width="0.5" stroke-linejoin="round"/><polygon points="1531.1,347.6 1548.2,347.6 1547.1,378.3 1531.1,378.3" fill="#5a88a3" stroke="#fff" stroke-opacity="0.75" stroke-width="0.5" stroke-linejoin="round"/><polygon points="1548.2,347.6 1568.7,348.7 1565.3,378.3 1547.1,378.3" fill="#6080a3" stroke="#fff" stroke-opacity="0.75" stroke-width="0.5" stroke-linejoin="round"/><polygon points="1568.7,348.7 1577.8,348.7 1583.5,362.4 1582.4,370.4 1575.5,378.3 1565.3,378.3" fill="#6a5696" stroke="#fff" stroke-opacity="0.75" stroke-width="0.5" stroke-linejoin="round"/><polygon points="1440.0,347.6 1442.3,347.6 1442.3,360.1 1453.7,362.4 1450.3,385.2 1451.4,405.7 1440.0,405.7" fill="#50a69e" stroke="#fff" stroke-opacity="0.75" stroke-width="0.5" stroke-linejoin="round"/><polygon points="1453.7,362.4 1466.2,362.4 1474.2,368.1 1476.4,376.1 1468.5,382.9 1454.8,378.3" fill="#6b4f8c" stroke="#fff" stroke-opacity="0.75" stroke-width="0.5" stroke-linejoin="round"/><polygon points="1474.2,368.1 1496.9,364.7 1495.8,405.7 1486.7,405.7 1478.7,389.7 1468.5,382.9 1476.4,376.1" fill="#52a69e" stroke="#fff" stroke-opacity="0.75" stroke-width="0.5" stroke-linejoin="round"/><polygon points="1450.3,385.2 1454.8,378.3 1468.5,382.9 1478.7,389.7 1486.7,405.7 1451.4,405.7" fill="#5592a0" stroke="#fff" stroke-opacity="0.75" stroke-width="0.5" stroke-linejoin="round"/><polygon points="1496.9,373.8 1530.0,374.9 1530.0,405.7 1495.8,405.7" fill="#8cd67c" stroke="#fff" stroke-opacity="0.75" stroke-width="0.5" stroke-linejoin="round"/><polygon points="1530.0,378.3 1571.0,378.3 1567.6,396.6 1556.2,397.7 1542.5,406.8 1530.0,405.7" fill="#70c68c" stroke="#fff" stroke-opacity="0.75" stroke-width="0.5" stroke-linejoin="round"/><polygon points="1571.0,378.3 1583.5,362.4 1597.2,363.5 1613.1,376.1 1615.4,382.9 1585.8,404.5 1567.6,396.6" fill="#c4e06e" stroke="#fff" stroke-opacity="0.75" stroke-width="0.5" stroke-linejoin="round"/><polygon points="1585.8,404.5 1615.4,382.9 1620.0,387.4 1624.5,401.1 1617.7,421.6 1604.0,426.2 1594.9,421.6 1581.2,401.1" fill="#a4da74" stroke="#fff" stroke-opacity="0.75" stroke-width="0.5" stroke-linejoin="round"/><polygon points="1542.5,406.8 1556.2,397.7 1566.4,405.7 1552.8,421.6" fill="#6b4f8c" stroke="#fff" stroke-opacity="0.75" stroke-width="0.5" stroke-linejoin="round"/><polygon points="1440.0,405.7 1451.4,405.7 1449.1,414.8 1462.8,430.7 1446.8,446.7 1440.0,439.8" fill="#50a69e" stroke="#fff" stroke-opacity="0.75" stroke-width="0.5" stroke-linejoin="round"/><polygon points="1449.1,406.8 1478.7,406.8 1468.5,430.7 1462.8,430.7 1450.3,414.8" fill="#6a6aa0" stroke="#fff" stroke-opacity="0.75" stroke-width="0.5" stroke-linejoin="round"/><polygon points="1478.7,406.8 1491.3,406.8 1495.8,417.1 1493.5,433.0 1489.0,434.1 1481.0,433.0 1468.5,430.7" fill="#6374a0" stroke="#fff" stroke-opacity="0.75" stroke-width="0.5" stroke-linejoin="round"/><polygon points="1491.3,406.8 1516.3,406.8 1519.7,426.2 1524.3,434.1 1503.8,436.4 1494.7,433.0 1495.8,417.1" fill="#5888a0" stroke="#fff" stroke-opacity="0.75" stroke-width="0.5" stroke-linejoin="round"/><polygon points="1516.3,406.8 1542.5,406.8 1552.8,421.6 1558.5,430.7 1536.8,444.4 1531.1,442.1 1524.3,434.1 1519.7,426.2" fill="#72c68a" stroke="#fff" stroke-opacity="0.75" stroke-width="0.5" stroke-linejoin="round"/><polygon points="1552.8,421.6 1566.4,405.7 1581.2,401.1 1594.9,421.6 1581.2,427.3 1558.5,430.7" fill="#4fb0a0" stroke="#fff" stroke-opacity="0.75" stroke-width="0.5" stroke-linejoin="round"/><polygon points="1446.8,446.7 1462.8,430.7 1481.0,433.0 1478.7,461.5 1448.0,460.3" fill="#54b89c" stroke="#fff" stroke-opacity="0.75" stroke-width="0.5" stroke-linejoin="round"/><polygon points="1481.0,433.0 1494.7,433.0 1503.8,436.4 1509.5,455.8 1506.1,461.5 1478.7,461.5" fill="#52a69e" stroke="#fff" stroke-opacity="0.75" stroke-width="0.5" stroke-linejoin="round"/><polygon points="1503.8,436.4 1524.3,434.1 1531.1,442.1 1533.4,446.7 1523.1,462.6 1506.1,461.5 1509.5,455.8" fill="#5890a0" stroke="#fff" stroke-opacity="0.75" stroke-width="0.5" stroke-linejoin="round"/><polygon points="1523.1,462.6 1533.4,446.7 1540.2,447.8 1543.6,464.9 1535.7,475.1" fill="#6a69a0" stroke="#fff" stroke-opacity="0.75" stroke-width="0.5" stroke-linejoin="round"/><polygon points="1536.8,444.4 1558.5,430.7 1563.0,452.4 1551.6,460.3 1543.6,464.9 1540.2,447.8" fill="#6676a0" stroke="#fff" stroke-opacity="0.75" stroke-width="0.5" stroke-linejoin="round"/><polygon points="1558.5,430.7 1581.2,427.3 1590.3,428.5 1588.1,442.1 1597.2,459.2 1572.1,460.3 1563.0,452.4" fill="#5ebd98" stroke="#fff" stroke-opacity="0.75" stroke-width="0.5" stroke-linejoin="round"/><polygon points="1590.3,428.5 1594.9,421.6 1604.0,426.2 1613.1,426.2 1620.0,433.0 1621.1,469.5 1615.4,483.1 1599.5,460.3 1588.1,442.1" fill="#fce45c" stroke="#fff" stroke-opacity="0.75" stroke-width="0.5" stroke-linejoin="round"/><polygon points="1535.7,475.1 1543.6,464.9 1551.6,460.3 1563.0,452.4 1579.0,472.9 1575.5,490.0 1560.7,501.3" fill="#f8e466" stroke="#fff" stroke-opacity="0.75" stroke-width="0.5" stroke-linejoin="round"/><polygon points="1572.1,460.3 1597.2,459.2 1615.4,483.1 1620.0,491.1 1608.6,497.9 1581.2,491.1 1575.5,490.0 1579.0,472.9" fill="#d4e270" stroke="#fff" stroke-opacity="0.75" stroke-width="0.5" stroke-linejoin="round"/><polygon points="1560.7,501.3 1575.5,490.0 1608.6,497.9 1615.4,501.3 1597.2,515.0 1589.2,529.8" fill="#f8e466" stroke="#fff" stroke-opacity="0.75" stroke-width="0.5" stroke-linejoin="round"/><polygon points="1589.2,529.8 1597.2,515.0 1615.4,501.3 1629.1,499.1 1634.8,528.7 1629.1,534.4 1592.6,536.7" fill="#aadc74" stroke="#fff" stroke-opacity="0.75" stroke-width="0.5" stroke-linejoin="round"/><polygon points="1620.0,433.0 1640.0,433.0 1640.0,469.5 1621.1,469.5" fill="#98d878" stroke="#fff" stroke-opacity="0.75" stroke-width="0.5" stroke-linejoin="round"/><polygon points="1615.4,483.1 1621.1,469.5 1640.0,469.5 1640.0,499.1 1629.1,499.1 1620.0,491.1" fill="#bce070" stroke="#fff" stroke-opacity="0.75" stroke-width="0.5" stroke-linejoin="round"/><polygon points="1613.1,346.4 1634.8,351.0 1629.1,355.6 1620.0,373.8 1615.4,382.9 1613.1,376.1 1597.2,363.5 1604.0,353.3 1612.0,344.2" fill="#5492a0" stroke="#fff" stroke-opacity="0.75" stroke-width="0.5" stroke-linejoin="round"/><polygon points="1629.1,355.6 1640.0,351.0 1640.0,380.6 1620.0,387.4 1615.4,382.9" fill="#52a3a0" stroke="#fff" stroke-opacity="0.75" stroke-width="0.5" stroke-linejoin="round"/><polygon points="1620.0,387.4 1640.0,380.6 1640.0,400.0 1624.5,401.1" fill="#6676a0" stroke="#fff" stroke-opacity="0.75" stroke-width="0.5" stroke-linejoin="round"/><polygon points="1617.7,421.6 1624.5,401.1 1640.0,400.0 1640.0,434.1 1613.1,426.2" fill="#54a0a0" stroke="#fff" stroke-opacity="0.75" stroke-width="0.5" stroke-linejoin="round"/></g><g clip-path="url(#c3)"><polygon points="1630.0,322.6 1637.2,322.6 1635.4,326.2 1631.8,349.6 1630.0,351.4" fill="#5888a0" stroke="#fff" stroke-opacity="0.75" stroke-width="0.5" stroke-linejoin="round"/><polygon points="1637.2,322.6 1689.5,322.6 1691.3,328.0 1687.7,329.8 1684.1,346.0 1677.7,350.5 1671.4,348.7 1667.8,342.4 1658.8,337.0 1657.0,329.8 1643.5,326.2" fill="#4fb0a0" stroke="#fff" stroke-opacity="0.75" stroke-width="0.5" stroke-linejoin="round"/><polygon points="1635.4,326.2 1643.5,326.2 1657.0,329.8 1658.8,337.0 1667.8,342.4 1672.3,349.6 1678.6,350.5 1680.5,358.6 1669.6,365.9 1661.5,362.3 1649.8,355.0 1631.8,349.6" fill="#79ca86" stroke="#fff" stroke-opacity="0.75" stroke-width="0.5" stroke-linejoin="round"/><polygon points="1689.5,322.6 1702.1,322.6 1699.4,329.8 1702.1,335.2 1714.7,346.0 1684.1,346.0 1687.7,329.8 1691.3,328.0" fill="#6676a0" stroke="#fff" stroke-opacity="0.75" stroke-width="0.5" stroke-linejoin="round"/><polygon points="1702.1,322.6 1727.3,322.6 1730.9,337.0 1714.7,342.4 1702.1,335.2 1700.3,329.8" fill="#6676a0" stroke="#fff" stroke-opacity="0.75" stroke-width="0.5" stroke-linejoin="round"/><polygon points="1677.7,350.5 1684.1,346.9 1714.7,346.9 1713.8,356.8 1716.5,367.7 1712.9,373.1 1705.7,381.2 1702.1,374.9 1697.6,379.4 1693.1,372.2 1684.1,369.5 1671.4,365.0" fill="#72c68a" stroke="#fff" stroke-opacity="0.75" stroke-width="0.5" stroke-linejoin="round"/><polygon points="1715.6,343.3 1722.8,340.6 1723.7,357.7 1733.6,361.4 1723.7,365.0 1716.5,359.5" fill="#6b2a78" stroke="#fff" stroke-opacity="0.75" stroke-width="0.5" stroke-linejoin="round"/><polygon points="1722.8,339.7 1730.9,337.0 1743.5,356.8 1733.6,358.6 1723.7,357.7" fill="#6b4a88" stroke="#fff" stroke-opacity="0.75" stroke-width="0.5" stroke-linejoin="round"/><polygon points="1727.3,322.6 1741.7,322.6 1754.3,335.2 1754.3,353.2 1745.3,349.6 1730.9,328.0" fill="#6b4a88" stroke="#fff" stroke-opacity="0.75" stroke-width="0.5" stroke-linejoin="round"/><polygon points="1741.7,322.6 1759.7,322.6 1765.1,335.2 1764.2,351.4 1754.3,338.8" fill="#6b5088" stroke="#fff" stroke-opacity="0.75" stroke-width="0.5" stroke-linejoin="round"/><polygon points="1630.0,351.4 1631.8,349.6 1649.8,355.0 1643.5,379.4 1630.0,382.1" fill="#50a0a0" stroke="#fff" stroke-opacity="0.75" stroke-width="0.5" stroke-linejoin="round"/><polygon points="1649.8,355.0 1661.5,362.3 1671.4,365.0 1674.1,379.4 1666.0,382.1 1651.6,392.9 1647.1,380.3 1643.5,379.4" fill="#529ea0" stroke="#fff" stroke-opacity="0.75" stroke-width="0.5" stroke-linejoin="round"/><polygon points="1671.4,365.0 1684.1,369.5 1693.1,372.2 1697.6,379.4 1702.1,374.9 1705.7,381.2 1709.3,376.7 1707.5,387.5 1698.5,393.8 1684.1,387.5 1674.1,380.3" fill="#5592a0" stroke="#fff" stroke-opacity="0.75" stroke-width="0.5" stroke-linejoin="round"/><polygon points="1709.3,374.0 1730.9,369.5 1738.1,371.3 1734.5,390.2 1707.5,390.2" fill="#6274a0" stroke="#fff" stroke-opacity="0.75" stroke-width="0.5" stroke-linejoin="round"/><polygon points="1738.1,371.3 1756.1,369.5 1759.7,374.9 1757.9,389.3 1748.9,392.9 1747.1,398.3 1743.5,391.1 1734.5,390.2" fill="#6277a0" stroke="#fff" stroke-opacity="0.75" stroke-width="0.5" stroke-linejoin="round"/><polygon points="1763.3,375.8 1774.1,373.1 1778.6,378.5 1779.5,393.8 1776.8,399.2 1761.5,392.0" fill="#6274a0" stroke="#fff" stroke-opacity="0.75" stroke-width="0.5" stroke-linejoin="round"/><polygon points="1630.0,382.1 1643.5,379.4 1647.1,380.3 1651.6,392.9 1642.6,400.1 1630.0,398.3" fill="#6a6aa0" stroke="#fff" stroke-opacity="0.75" stroke-width="0.5" stroke-linejoin="round"/><polygon points="1651.6,392.9 1666.0,382.1 1674.1,380.3 1684.1,387.5 1689.5,401.9 1684.1,405.5 1683.2,414.5 1674.1,419.9 1667.8,414.5 1664.2,403.7 1658.8,401.0" fill="#5ebd98" stroke="#fff" stroke-opacity="0.75" stroke-width="0.5" stroke-linejoin="round"/><polygon points="1684.1,389.3 1698.5,393.8 1707.5,390.2 1720.1,391.1 1721.9,396.5 1729.1,401.9 1720.1,404.6 1719.2,412.7 1707.5,409.1 1691.3,401.9 1689.5,401.9" fill="#a0da78" stroke="#fff" stroke-opacity="0.75" stroke-width="0.5" stroke-linejoin="round"/><polygon points="1721.9,391.1 1734.5,390.2 1747.1,398.3 1748.9,392.9 1759.7,392.0 1768.7,394.7 1763.3,405.5 1752.5,418.1 1730.9,412.7 1732.7,403.7 1729.1,401.9" fill="#5abd98" stroke="#fff" stroke-opacity="0.75" stroke-width="0.5" stroke-linejoin="round"/><polygon points="1642.6,400.1 1651.6,392.9 1658.8,401.0 1664.2,403.7 1667.8,414.5 1663.3,418.1 1653.4,419.0 1644.4,416.3" fill="#6b4f8c" stroke="#fff" stroke-opacity="0.75" stroke-width="0.5" stroke-linejoin="round"/><polygon points="1630.0,398.3 1642.6,400.1 1644.4,416.3 1641.7,434.3 1630.0,433.4" fill="#52a3a0" stroke="#fff" stroke-opacity="0.75" stroke-width="0.5" stroke-linejoin="round"/><polygon points="1685.9,403.7 1691.3,401.9 1707.5,409.1 1719.2,412.7 1720.1,423.5 1711.1,430.7 1698.5,430.7 1687.7,414.5" fill="#a0da78" stroke="#fff" stroke-opacity="0.75" stroke-width="0.5" stroke-linejoin="round"/><polygon points="1641.7,418.1 1653.4,419.0 1663.3,418.1 1667.8,421.7 1666.0,428.9 1661.5,436.1 1649.8,445.1 1641.7,436.1" fill="#6676a0" stroke="#fff" stroke-opacity="0.75" stroke-width="0.5" stroke-linejoin="round"/><polygon points="1667.8,421.7 1674.1,419.9 1684.1,414.5 1687.7,414.5 1702.1,428.9 1698.5,434.3 1700.3,439.7 1689.5,441.5 1684.1,440.6 1664.2,428.9" fill="#5ebd98" stroke="#fff" stroke-opacity="0.75" stroke-width="0.5" stroke-linejoin="round"/><polygon points="1698.5,430.7 1711.1,428.9 1725.5,422.6 1728.2,427.1 1721.9,434.3 1718.3,445.1 1707.5,447.8 1700.3,441.5" fill="#6a69a0" stroke="#fff" stroke-opacity="0.75" stroke-width="0.5" stroke-linejoin="round"/><polygon points="1649.8,445.1 1661.5,436.1 1664.2,428.9 1684.1,440.6 1689.5,441.5 1687.7,463.2 1675.0,454.1 1653.4,448.7" fill="#5592a0" stroke="#fff" stroke-opacity="0.75" stroke-width="0.5" stroke-linejoin="round"/><polygon points="1689.5,442.4 1697.6,443.3 1703.9,452.3 1720.1,455.0 1716.5,457.7 1689.5,460.5" fill="#72c68a" stroke="#fff" stroke-opacity="0.75" stroke-width="0.5" stroke-linejoin="round"/><polygon points="1687.7,463.2 1716.5,457.7 1720.1,450.5 1732.7,446.9 1734.5,450.5 1740.8,450.5 1723.7,468.6 1694.9,471.3 1689.5,468.6" fill="#5592a0" stroke="#fff" stroke-opacity="0.75" stroke-width="0.5" stroke-linejoin="round"/><polygon points="1630.0,433.4 1641.7,434.3 1641.7,436.1 1649.8,445.1 1653.4,448.7 1653.4,470.4 1630.0,470.4" fill="#a0da78" stroke="#fff" stroke-opacity="0.75" stroke-width="0.5" stroke-linejoin="round"/><polygon points="1653.4,448.7 1675.0,454.1 1687.7,463.2 1689.5,468.6 1687.7,472.2 1659.7,490.2 1654.3,470.4" fill="#88d47e" stroke="#fff" stroke-opacity="0.75" stroke-width="0.5" stroke-linejoin="round"/></g><polygon points="1615,469 1622,469 1650,470 1659,490 1647,502 1630,497 1614,488 1612,476" fill="#bde070" stroke="#fff" stroke-opacity="0.75" stroke-width="0.5" stroke-linejoin="round"/><polygon points="1650,450 1688,471 1659,490 1650,470" fill="#88d47e" stroke="#fff" stroke-opacity="0.75" stroke-width="0.5" stroke-linejoin="round"/><polygon points="1614,488 1630,497 1634,510 1631,534 1593,536 1591,516 1605,502" fill="#aadc74" stroke="#fff" stroke-opacity="0.75" stroke-width="0.5" stroke-linejoin="round"/><polygon points="1630,497 1646,500 1641,511 1637,522 1633,510" fill="#6b2f7a" stroke="#fff" stroke-width="0.5"/><polyline points="1763.3,322.6 1772.3,323.5 1785.0,351.4 1794.9,385.7 1797.6,396.5 1795.8,410.9 1793.1,427.1 1781.4,430.4" fill="none" stroke="#6676a0" stroke-width="1"/><polyline points="1762.4,439.7 1775.9,432.5" fill="none" stroke="#5ebd98" stroke-width="1"/><polyline points="1726.4,479.4 1743.5,457.7" fill="none" stroke="#5592a0" stroke-width="1"/></svg><div class="a" style="left:1187px;top:288px;font-size:14.2px;line-height:17px;color:#000;white-space:nowrap">Counties of North Carolina</div><div class="a" style="left:1140px;top:320.5px;width:42px;text-align:right;font-size:9.3px;line-height:12px;color:#4d4d4d">36.5°N</div><div class="a" style="left:1140px;top:360.5px;width:42px;text-align:right;font-size:9.3px;line-height:12px;color:#4d4d4d">36.0°N</div><div class="a" style="left:1140px;top:400.5px;width:42px;text-align:right;font-size:9.3px;line-height:12px;color:#4d4d4d">35.5°N</div><div class="a" style="left:1140px;top:440.5px;width:42px;text-align:right;font-size:9.3px;line-height:12px;color:#4d4d4d">35.0°N</div><div class="a" style="left:1140px;top:481.5px;width:42px;text-align:right;font-size:9.3px;line-height:12px;color:#4d4d4d">34.5°N</div><div class="a" style="left:1140px;top:521.5px;width:42px;text-align:right;font-size:9.3px;line-height:12px;color:#4d4d4d">34.0°N</div><div class="a" style="left:1207.5px;top:549px;width:60px;text-align:center;font-size:9.3px;line-height:12px;color:#4d4d4d">84°W</div><div class="a" style="left:1338.5px;top:549px;width:60px;text-align:center;font-size:9.3px;line-height:12px;color:#4d4d4d">82°W</div><div class="a" style="left:1469.5px;top:549px;width:60px;text-align:center;font-size:9.3px;line-height:12px;color:#4d4d4d">80°W</div><div class="a" style="left:1600.5px;top:549px;width:60px;text-align:center;font-size:9.3px;line-height:12px;color:#4d4d4d">78°W</div><div class="a" style="left:1732.5px;top:549px;width:60px;text-align:center;font-size:9.3px;line-height:12px;color:#4d4d4d">76°W</div><div class="a" style="left:1843px;top:377px;font-size:11.5px;line-height:14px;color:#000">Area</div><div class="a" style="left:1843px;top:394px;width:17px;height:84px;background:linear-gradient(0deg,#440154 0%,#482878 12%,#3e4a89 25%,#31688e 37%,#26828e 50%,#1f9e89 62%,#35b779 75%,#6ece58 87%,#b5de2b 95%,#fde725 100%);opacity:0.95"></div><div class="a" style="left:1843px;top:410px;width:3px;height:1px;background:#fff"></div><div class="a" style="left:1857px;top:410px;width:3px;height:1px;background:#fff"></div><div class="a" style="left:1865px;top:404px;font-size:9.3px;line-height:12px;color:#1a1a1a">0.20</div><div class="a" style="left:1843px;top:431px;width:3px;height:1px;background:#fff"></div><div class="a" style="left:1857px;top:431px;width:3px;height:1px;background:#fff"></div><div class="a" style="left:1865px;top:425px;font-size:9.3px;line-height:12px;color:#1a1a1a">0.15</div><div class="a" style="left:1843px;top:452px;width:3px;height:1px;background:#fff"></div><div class="a" style="left:1857px;top:452px;width:3px;height:1px;background:#fff"></div><div class="a" style="left:1865px;top:446px;font-size:9.3px;line-height:12px;color:#1a1a1a">0.10</div><div class="a" style="left:1843px;top:473px;width:3px;height:1px;background:#fff"></div><div class="a" style="left:1857px;top:473px;width:3px;height:1px;background:#fff"></div><div class="a" style="left:1865px;top:467px;font-size:9.3px;line-height:12px;color:#1a1a1a">0.05</div><!--/PLOT-->
<div id="panel" class="a"></div>
<div class="a ui" style="left:367px;top:576px;line-height:16px;font-size:11px;color:#656d76;white-space:nowrap"><span style="display:inline-block;transform-origin:0 0;transform:scaleX(0.915921)">PROBLEMS</span></div><div class="a ui" style="left:447px;top:576px;line-height:16px;font-size:11px;color:#656d76;white-space:nowrap"><span style="display:inline-block;transform-origin:0 0;transform:scaleX(0.950604)">OUTPUT</span></div><div class="a ui" style="left:513px;top:576px;line-height:16px;font-size:11px;color:#656d76;white-space:nowrap"><span style="display:inline-block;transform-origin:0 0;transform:scaleX(0.906545)">DEBUG CONSOLE</span></div><div class="a ui" style="left:625px;top:576px;line-height:16px;font-size:11px;color:#1f2328;white-space:nowrap"><span style="display:inline-block;transform-origin:0 0;transform:scaleX(0.934831)">TERMINAL</span></div><div class="a ui" style="left:701px;top:576px;line-height:16px;font-size:11px;color:#656d76;white-space:nowrap"><span style="display:inline-block;transform-origin:0 0;transform:scaleX(0.901782)">PORTS</span></div><div class="a ui" style="left:785px;top:576px;line-height:16px;font-size:11px;color:#656d76;white-space:nowrap"><span style="display:inline-block;transform-origin:0 0;transform:scaleX(0.934989)">COMMENTS</span></div><div class="a" style="left:623px;top:597px;width:56px;height:1px;background:#fd8c73"></div><div class="a" style="left:744px;top:575px;width:18px;height:18px;border-radius:50%;background:#0969da;color:#fff;font-size:11px;line-height:18px;text-align:center">2</div><svg class="a" style="left:1797px;top:577px" width="14" height="14"><path d="M7 0.5V13.5M0.5 7H13.5" stroke="#1f2328" stroke-width="1.3"/></svg><svg class="a" style="left:1816px;top:581px" width="9" height="6"><path d="M0.8 0.8L4.5 4.5L8.2 0.8" fill="none" stroke="#424a53" stroke-width="1"/></svg><svg class="a" style="left:1836px;top:581px" width="16" height="6"><circle cx="2.5" cy="3" r="1.2" fill="#1f2328"/><circle cx="8" cy="3" r="1.2" fill="#1f2328"/><circle cx="13.5" cy="3" r="1.2" fill="#1f2328"/></svg><svg class="a" style="left:1864px;top:580px" width="12" height="8"><path d="M1 6.5L6 1.5L11 6.5" fill="none" stroke="#424a53" stroke-width="1.2"/></svg><svg class="a" style="left:1891px;top:579px" width="11" height="11"><path d="M1 1L10 10M10 1L1 10" stroke="#424a53" stroke-width="1.2"/></svg><div class="a" style="left:1799px;top:601px;width:1px;height:431px;background:#d0d7de"></div><div class="a" style="left:1801px;top:623px;width:117px;height:22px;background:#e6e9ec"></div><svg class="a" style="left:1810px;top:603px" width="16" height="17" viewBox="0 0 16 17"><path d="M8 1L14.5 4.7V12.3L8 16L1.5 12.3V4.7Z" fill="none" stroke="#c9ccd0" stroke-width="0.8"/><path d="M8.6 8.5L14 5.5V12L8.6 15Z" fill="#656d76"/></svg><div class="a ui" style="left:1829px;top:603px;line-height:18px">bash</div><svg class="a" style="left:1811px;top:626px" width="14" height="15" viewBox="0 0 14 15"><rect x="0.6" y="0.6" width="12.8" height="13.8" fill="none" stroke="#424a53" stroke-width="1.1"/><path d="M5 4.5L8 7.5L5 10.5" fill="none" stroke="#424a53" stroke-width="1"/></svg><div class="a ui" style="left:1829px;top:625px;line-height:18px">R Interactive</div><div class="a term" style="left:367px;top:613px">6  0.097     1.670  1833    1833    Hertford 37091  37091       46  1452     7
7  0.062     1.547  1834    1834      Camden 37029  37029       15   286     0
8  0.091     1.284  1835    1835       Gates 37073  37073       37   420     0
9  0.118     1.421  1836    1836      Warren 37185  37185       93   968     4
10 0.124     1.428  1837    1837      Stokes 37169  37169       85  1612     1
   NWBIR74 BIR79 SID79 NWBIR79                       geometry
1       10  1364     0      19 MULTIPOLYGON (((-81.47276 3...
2       10   542     3      12 MULTIPOLYGON (((-81.23989 3...
3      208  3616     6     260 MULTIPOLYGON (((-80.45634 3...
4      123   830     2     145 MULTIPOLYGON (((-76.00897 3...
5     1066  1606     3    1197 MULTIPOLYGON (((-77.21767 3...
6      954  1838     5    1237 MULTIPOLYGON (((-76.74506 3...
7      115   350     2     139 MULTIPOLYGON (((-76.00897 3...
8      254   594     2     371 MULTIPOLYGON (((-76.56251 3...
9      748  1190     2     844 MULTIPOLYGON (((-78.30876 3...
10     160  2038     5     176 MULTIPOLYGON (((-80.02567 3...
&gt; ggplot(nc) +
+     geom_sf(aes(fill = AREA), alpha = 0.8, col = "white") +
+     scale_fill_viridis_c(name = "Area") +
+     ggtitle("Counties of North Carolina") +
+     theme_minimal()
&gt;</div>
<div id="status" class="a"></div>
<div class="a" style="left:0;top:1033px;width:100px;height:21px;background:#e6eaef"></div><svg class="a" style="left:10px;top:1035px" width="12" height="16" viewBox="0 0 12 16"><path d="M1.5 7.5L5.5 11.5L1.5 15.5" fill="none" stroke="#1f2328" stroke-width="1.1"/><path d="M10.5 1.5L6.5 5.5L10.5 9.5" fill="none" stroke="#1f2328" stroke-width="1.1"/></svg><div class="a" style="left:26px;top:1035px;font-size:12px;line-height:16px;color:#1f2328;white-space:nowrap;transform-origin:0 0;transform:scaleX(0.94)">Codespaces</div><svg class="a" style="left:106px;top:1035px" width="13" height="16" viewBox="0 0 13 16"><circle cx="3" cy="3" r="2" fill="none" stroke="#656d76" stroke-width="1"/><circle cx="3" cy="13" r="2" fill="none" stroke="#656d76" stroke-width="1"/><circle cx="10" cy="5" r="2" fill="none" stroke="#656d76" stroke-width="1"/><path d="M3 5V11M10 7C10 10 4 9 3.5 11" fill="none" stroke="#656d76" stroke-width="1"/></svg><div class="a" style="left:123px;top:1035px;font-size:12px;line-height:16px;color:#656d76;white-space:nowrap">master</div><svg class="a" style="left:166px;top:1036px" width="15" height="14" viewBox="0 0 15 14"><path d="M2.5 6A5 5 0 0 1 12 4.5M12.5 8A5 5 0 0 1 3 9.5" fill="none" stroke="#656d76" stroke-width="1.1"/><path d="M12.5 1.5V5H9M2.5 12.5V9H6" fill="none" stroke="#656d76" stroke-width="1.1"/></svg><svg class="a" style="left:194px;top:1037px" width="14" height="14"><circle cx="7" cy="7" r="5.8" fill="none" stroke="#656d76" stroke-width="1"/><path d="M4.7 4.7L9.3 9.3M9.3 4.7L4.7 9.3" stroke="#656d76" stroke-width="1"/></svg><div class="a" style="left:211px;top:1035px;font-size:12px;line-height:16px;color:#656d76;white-space:nowrap">0</div><svg class="a" style="left:220px;top:1036px" width="14" height="14"><path d="M7 1.5L13 12.5H1Z" fill="none" stroke="#656d76" stroke-width="1" stroke-linejoin="round"/><path d="M7 5.5V9M7 10.3V11.2" stroke="#656d76" stroke-width="1"/></svg><div class="a" style="left:238px;top:1035px;font-size:12px;line-height:16px;color:#656d76;white-space:nowrap">0</div><svg class="a" style="left:261px;top:1036px" width="14" height="15" viewBox="0 0 14 15"><path d="M7 6L4 14M7 6L10 14M5 11H9" fill="none" stroke="#656d76" stroke-width="1"/><path d="M3 2A6 6 0 0 0 3 9M11 2A6 6 0 0 1 11 9M5 3.5A3 3 0 0 0 5 7.5M9 3.5A3 3 0 0 1 9 7.5" fill="none" stroke="#656d76" stroke-width="1"/></svg><div class="a" style="left:278px;top:1035px;font-size:12px;line-height:16px;color:#656d76;white-space:nowrap">2</div><div class="a" style="left:1462px;top:1035px;font-size:11.5px;line-height:16px;color:#656d76;white-space:nowrap">R 4.3.1: 2817</div><div class="a" style="left:1547px;top:1035px;font-size:11.5px;line-height:16px;color:#656d76;white-space:nowrap">Ln 20, Col 1</div><div class="a" style="left:1625px;top:1035px;font-size:11.5px;line-height:16px;color:#656d76;white-space:nowrap">Spaces: 4</div><div class="a" style="left:1690px;top:1035px;font-size:11.5px;line-height:16px;color:#656d76;white-space:nowrap">UTF-8</div><div class="a" style="left:1737px;top:1035px;font-size:11.5px;line-height:16px;color:#656d76;white-space:nowrap">LF</div><div class="a" style="left:1766px;top:1035px;font-size:11.5px;line-height:16px;color:#656d76;white-space:nowrap">R</div><div class="a" style="left:1790px;top:1035px;font-size:11.5px;line-height:16px;color:#656d76;white-space:nowrap">Layout: us</div><svg class="a" style="left:1859px;top:1036px" width="16" height="15" viewBox="0 0 16 15"><circle cx="6" cy="5" r="3" fill="none" stroke="#656d76" stroke-width="1"/><path d="M1 14C1.5 10 10.5 10 11 14" fill="none" stroke="#656d76" stroke-width="1"/><path d="M9 1.5H15V7H12L10.5 8.5" fill="none" stroke="#656d76" stroke-width="1"/></svg><svg class="a" style="left:1890px;top:1036px" width="15" height="15" viewBox="0 0 15 15"><path d="M3 11V6.5A4.5 4.5 0 0 1 12 6.5V11L13.5 12.5H1.5Z" fill="none" stroke="#656d76" stroke-width="1" stroke-linejoin="round"/><path d="M6 13.5A1.5 1.5 0 0 0 9 13.5" fill="none" stroke="#656d76" stroke-width="1"/></svg>
</body></html>
